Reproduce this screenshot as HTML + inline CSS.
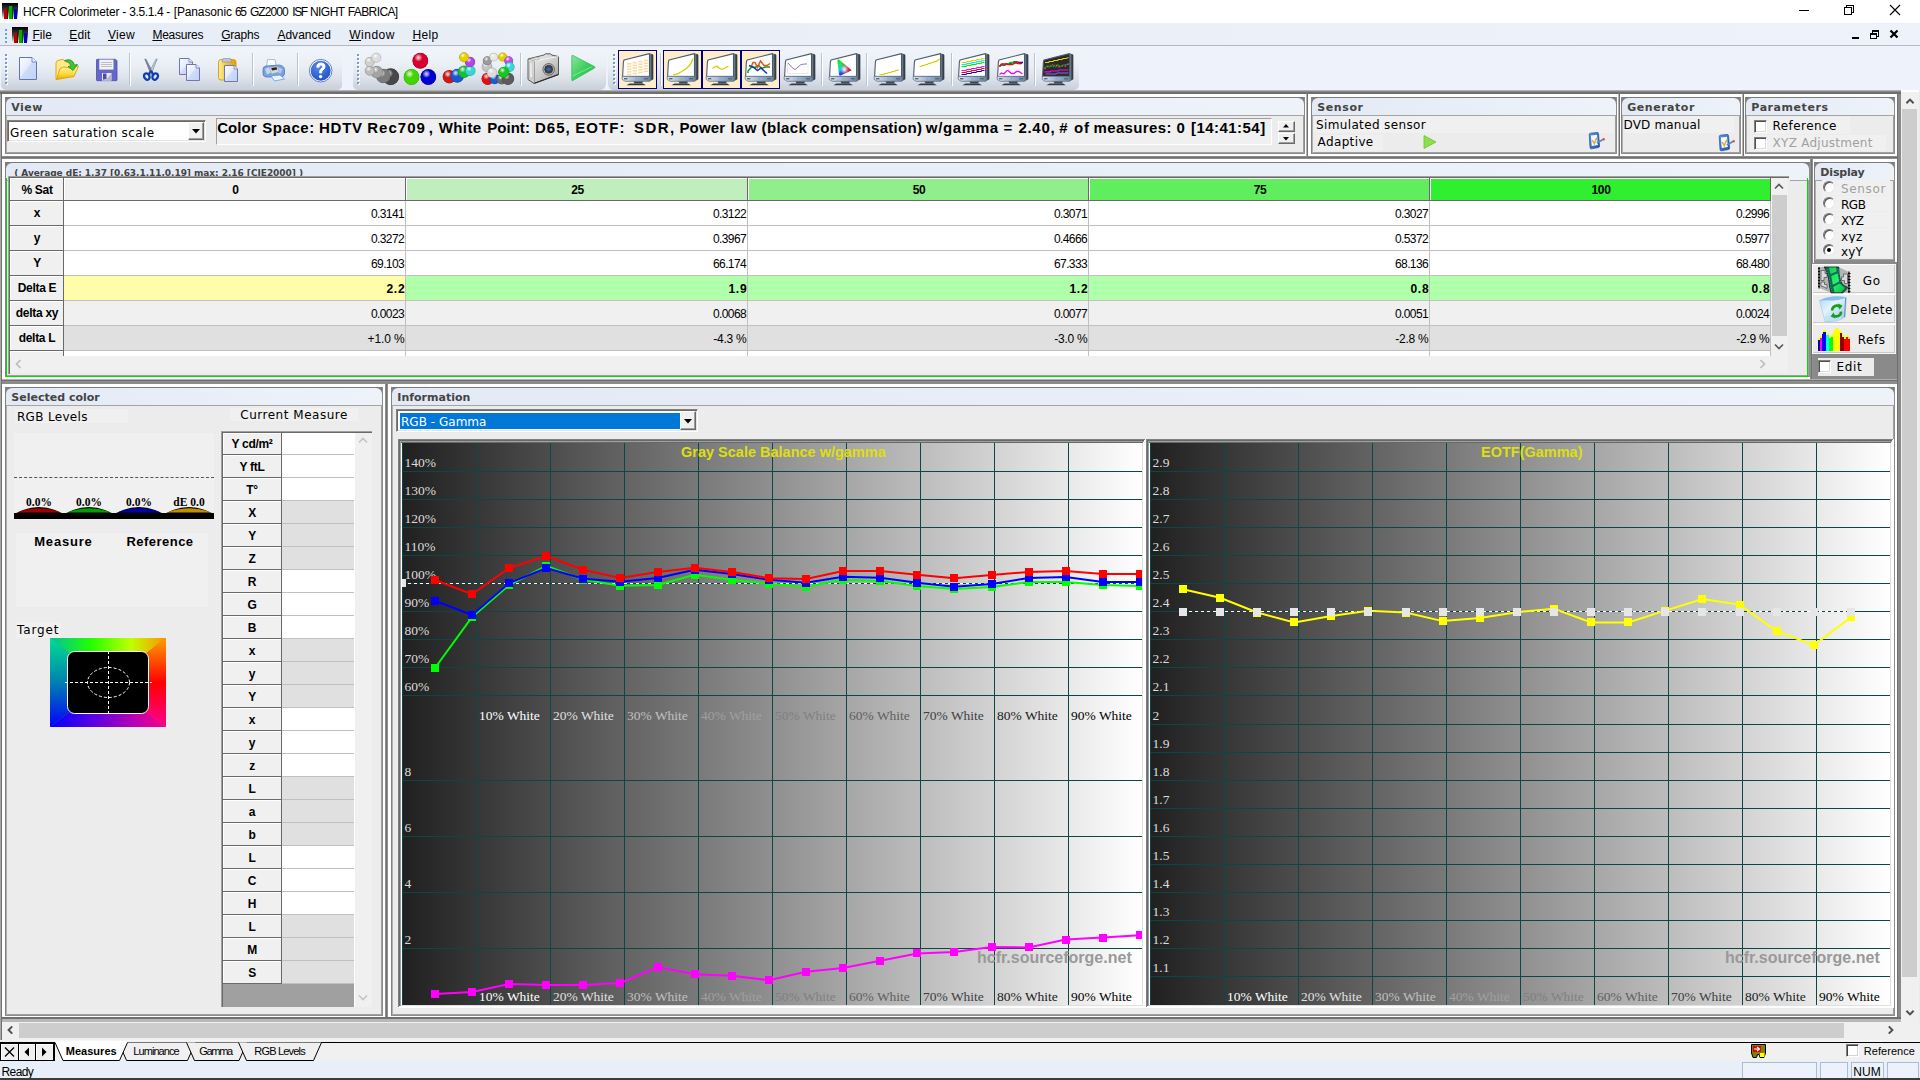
<!DOCTYPE html><html><head><meta charset="utf-8"><title>HCFR Colorimeter</title><style>
*{box-sizing:border-box;margin:0;padding:0}
html,body{width:1920px;height:1080px;overflow:hidden;background:#fff}
body{position:relative;font-family:"Liberation Sans",sans-serif;font-size:12px;color:#000}
.a{position:absolute}
.t{position:absolute;white-space:pre;line-height:1}
.seg{font-family:"Liberation Sans",sans-serif}
.ver{font-family:"DejaVu Sans","Liberation Sans",sans-serif}
.ser{font-family:"Liberation Serif",serif}
.grp{position:absolute;border:1px solid;border-color:#7c7c7c #8c8c8c #8c8c8c #828282;background:#ececec;box-shadow:inset 1px 0 0 #b0b0b0,inset -1px -1px 0 #a0a0a0}
.grp::before{content:"";position:absolute;left:0;right:0;top:0;height:6px;background:#808080}
.grp .hd{position:absolute;left:0;right:0;top:0;height:18px;background:linear-gradient(90deg,#e3eaf5,#eef3fa);border-bottom:1px solid #a4a4a4;border-radius:6px 6px 0 0}
.grp .hd span{position:absolute;left:7px;top:3px;font:bold 11px "DejaVu Sans","Liberation Sans",sans-serif;color:#444;white-space:pre;line-height:13px}
.sunk{position:absolute;border:1px solid;border-color:#808080 #fff #fff #808080;box-shadow:inset 1px 1px 0 #696969,inset -1px -1px 0 #e3e3e3;background:#fff}
.rais{position:absolute;border:1px solid;border-color:#fff #696969 #696969 #fff;box-shadow:inset -1px -1px 0 #a0a0a0;background:#f0f0f0}
.cb{position:absolute;width:13px;height:13px;background:#fff;border:1px solid;border-color:#808080 #fff #fff #808080;box-shadow:inset 1px 1px 0 #505050,inset -1px -1px 0 #dcdcdc}
.rd{position:absolute;width:12px;height:12px;border-radius:50%;background:#fff;border:1px solid;border-color:#707070 #e8e8e8 #e8e8e8 #707070;box-shadow:inset 1px 1px 0 #555}
</style></head><body>
<div class="a" style="left:0px;top:0px;width:1920px;height:23px;background:#fff;"></div>
<div class="t seg" style="left:23.03px;letter-spacing:-0.150px;top:6.00px;font-size:12px;">HCFR Colorimeter</div>
<div class="t seg" style="left:122.28px;top:6.00px;font-size:12px;">-</div>
<div class="t seg" style="left:129.28px;letter-spacing:-0.377px;top:6.00px;font-size:12px;">3.5.1.4</div>
<div class="t seg" style="left:166.28px;top:6.00px;font-size:12px;">-</div>
<div class="t seg" style="left:173.68px;letter-spacing:-0.121px;top:6.00px;font-size:12px;">[Panasonic</div>
<div class="t seg" style="left:234.88px;letter-spacing:-1.269px;top:6.00px;font-size:12px;">65</div>
<div class="t seg" style="left:249.88px;letter-spacing:-0.904px;top:6.00px;font-size:12px;">GZ2000</div>
<div class="t seg" style="left:292.28px;letter-spacing:-1.366px;top:6.00px;font-size:12px;">ISF</div>
<div class="t seg" style="left:309.88px;letter-spacing:-0.526px;top:6.00px;font-size:12px;">NIGHT</div>
<div class="t seg" style="left:347.78px;letter-spacing:-0.607px;top:6.00px;font-size:12px;">FABRICA]</div>
<div class="a" style="left:0px;top:23px;width:1920px;height:23px;background:linear-gradient(90deg,#e7edf6,#eef2fa);border-bottom:1px solid #b4b8c0"></div>
<div class="t seg" style="left:32.38px;letter-spacing:0.077px;top:29.00px;font-size:12px;text-underline-offset:1px;"><u>F</u>ile</div>
<div class="t seg" style="left:69.28px;letter-spacing:0.162px;top:29.00px;font-size:12px;text-underline-offset:1px;"><u>E</u>dit</div>
<div class="t seg" style="left:108.03px;letter-spacing:0.293px;top:29.00px;font-size:12px;text-underline-offset:1px;"><u>V</u>iew</div>
<div class="t seg" style="left:152.38px;letter-spacing:-0.230px;top:29.00px;font-size:12px;text-underline-offset:1px;"><u>M</u>easures</div>
<div class="t seg" style="left:221.18px;letter-spacing:-0.217px;top:29.00px;font-size:12px;text-underline-offset:1px;"><u>G</u>raphs</div>
<div class="t seg" style="left:277.38px;letter-spacing:0.028px;top:29.00px;font-size:12px;text-underline-offset:1px;"><u>A</u>dvanced</div>
<div class="t seg" style="left:349.28px;letter-spacing:0.500px;top:29.00px;font-size:12px;text-underline-offset:1px;"><u>W</u>indow</div>
<div class="t seg" style="left:412.38px;letter-spacing:0.384px;top:29.00px;font-size:12px;text-underline-offset:1px;"><u>H</u>elp</div>
<div class="a" style="left:0px;top:46px;width:1920px;height:44px;background:#eef2fa;"></div>
<div class="a" style="left:2px;top:48px;width:340px;height:42px;background:linear-gradient(#f0f4fb,#e8edf5 45%,#dbe1ea 70%,#c9d0da);border-radius:0 0 6px 6px"></div>
<div class="a" style="left:353px;top:48px;width:253px;height:42px;background:linear-gradient(#f0f4fb,#e8edf5 45%,#dbe1ea 70%,#c9d0da);border-radius:0 0 6px 6px"></div>
<div class="a" style="left:608px;top:48px;width:470px;height:42px;background:linear-gradient(#f0f4fb,#e8edf5 45%,#dbe1ea 70%,#c9d0da);border-radius:0 0 6px 6px"></div>
<div class="a" style="left:0px;top:90px;width:1920px;height:952px;background:#fff;"></div>
<div class="a" style="left:0px;top:90px;width:1901px;height:1px;background:#b0b0b0;"></div>
<div class="a" style="left:0px;top:91px;width:1901px;height:1px;background:#8a8a8a;"></div>
<div class="a" style="left:0px;top:92px;width:1901px;height:1px;background:#6f6f6f;"></div>
<div class="a" style="left:0px;top:93px;width:1901px;height:1px;background:#6f6f6f;"></div>
<div class="a" style="left:0px;top:94px;width:1px;height:946px;background:#a8a8a8;"></div>
<div class="a" style="left:1px;top:94px;width:1px;height:946px;background:#707070;"></div>
<div class="a" style="left:1897px;top:94px;width:1px;height:924px;background:#707070;"></div>
<div class="a" style="left:1898px;top:94px;width:3px;height:925px;background:#898989;"></div>
<div class="a" style="left:2px;top:1017px;width:1899px;height:1px;background:#707070;"></div>
<div class="a" style="left:2px;top:1018px;width:1899px;height:1px;background:#707070;"></div>
<div class="a" style="left:2px;top:1019px;width:1899px;height:1px;background:#b8b8b8;"></div>
<div class="a" style="left:2px;top:1020px;width:1899px;height:1px;background:#b8b8b8;"></div>
<div class="a" style="left:2px;top:1021px;width:1899px;height:1px;background:#b8b8b8;"></div>
<div class="a" style="left:2px;top:156px;width:1895px;height:1px;background:#8c8c8c;"></div>
<div class="a" style="left:2px;top:157px;width:1895px;height:1px;background:#6e6e6e;"></div>
<div class="a" style="left:2px;top:158px;width:1895px;height:1px;background:#8c8c8c;"></div>
<div class="a" style="left:2px;top:379px;width:1895px;height:1px;background:#b0b0b0;"></div>
<div class="a" style="left:2px;top:380px;width:1895px;height:1px;background:#707070;"></div>
<div class="a" style="left:2px;top:381px;width:1895px;height:1px;background:#8c8c8c;"></div>
<div class="a" style="left:2px;top:382px;width:1895px;height:1px;background:#8c8c8c;"></div>
<div class="a" style="left:2px;top:383px;width:1895px;height:1px;background:#8c8c8c;"></div>
<div class="a" style="left:1306px;top:94px;width:1px;height:62px;background:#b4b4b4;"></div>
<div class="a" style="left:1307px;top:94px;width:1px;height:62px;background:#707070;"></div>
<div class="a" style="left:1618px;top:94px;width:1px;height:62px;background:#b4b4b4;"></div>
<div class="a" style="left:1619px;top:94px;width:1px;height:62px;background:#707070;"></div>
<div class="a" style="left:1742px;top:94px;width:1px;height:62px;background:#b4b4b4;"></div>
<div class="a" style="left:1743px;top:94px;width:1px;height:62px;background:#707070;"></div>
<div class="a" style="left:1810px;top:159px;width:1px;height:220px;background:#909090;"></div>
<div class="a" style="left:1811px;top:159px;width:1px;height:220px;background:#707070;"></div>
<div class="a" style="left:1812px;top:159px;width:1px;height:220px;background:#909090;"></div>
<div class="a" style="left:385px;top:384px;width:1px;height:633px;background:#909090;"></div>
<div class="a" style="left:386px;top:384px;width:1px;height:633px;background:#707070;"></div>
<div class="a" style="left:387px;top:384px;width:1px;height:633px;background:#909090;"></div>
<div class="a" style="left:1901px;top:92px;width:18px;height:930px;background:#f0f0f0;"></div>
<div class="a" style="left:1902px;top:109px;width:15px;height:868px;background:#cdcdcd;"></div>
<div class="a" style="left:1919px;top:90px;width:1px;height:952px;background:#ebebeb;"></div>
<div class="a" style="left:2px;top:1022px;width:1918px;height:18px;background:#f0f0f0;"></div>
<div class="a" style="left:19px;top:1023px;width:1825px;height:15px;background:#cdcdcd;"></div>
<svg class="a" style="left:1905px;top:96px" width="10" height="10" viewBox="0 0 10 10"><path d="M1.4 7.2 L5 3.6 L8.6 7.2" fill="none" stroke="#505050" stroke-width="2"/></svg>
<svg class="a" style="left:1905px;top:1008px" width="10" height="10" viewBox="0 0 10 10"><path d="M1.4 2.8 L5 6.4 L8.6 2.8" fill="none" stroke="#505050" stroke-width="2"/></svg>
<svg class="a" style="left:5px;top:1025px" width="10" height="10" viewBox="0 0 10 10"><path d="M7.2 1.4 L3.6 5 L7.2 8.6" fill="none" stroke="#505050" stroke-width="2"/></svg>
<svg class="a" style="left:1886px;top:1025px" width="10" height="10" viewBox="0 0 10 10"><path d="M2.8 1.4 L6.4 5 L2.8 8.6" fill="none" stroke="#505050" stroke-width="2"/></svg>
<div class="a" style="left:0px;top:1040px;width:1920px;height:2px;background:#f4f4f4;"></div>
<div class="a" style="left:0px;top:1042px;width:1920px;height:1px;background:#000;"></div>
<div class="a" style="left:0px;top:1043px;width:1920px;height:18px;background:#f0f0f0;"></div>
<div class="a" style="left:0px;top:1061px;width:1920px;height:17px;background:#e9eff8;"></div>
<div class="a" style="left:0px;top:1078px;width:1920px;height:2px;background:#3a3a3a;"></div>
<div class="t seg" style="left:1.58px;letter-spacing:-0.637px;top:1066.00px;font-size:12px;">Ready</div>
<div class="grp" style="left:5px;top:97px;width:1300px;height:57px;"><div class="hd"></div></div>
<div class="t ver" style="left:11.34px;letter-spacing:0.467px;top:102.00px;font-size:11px;font-weight:bold;color:#444;">View</div>
<div class="grp" style="left:1311px;top:97px;width:306px;height:57px;"><div class="hd"></div></div>
<div class="t ver" style="left:1317.34px;letter-spacing:0.574px;top:102.00px;font-size:11px;font-weight:bold;color:#444;">Sensor</div>
<div class="grp" style="left:1621px;top:97px;width:120px;height:57px;"><div class="hd"></div></div>
<div class="t ver" style="left:1627.34px;letter-spacing:0.518px;top:102.00px;font-size:11px;font-weight:bold;color:#444;">Generator</div>
<div class="grp" style="left:1745px;top:97px;width:150px;height:57px;"><div class="hd"></div></div>
<div class="t ver" style="left:1751.34px;letter-spacing:0.552px;top:102.00px;font-size:11px;font-weight:bold;color:#444;">Parameters</div>
<div class="sunk" style="left:7px;top:120px;width:199px;height:22px"></div>
<div class="t ver" style="left:10.08px;letter-spacing:0.374px;top:127.00px;font-size:12px;">Green saturation scale</div>
<div class="rais" style="left:188px;top:122px;width:16px;height:18px"></div>
<svg class="a" style="left:192px;top:129px" width="8" height="5"><path d="M0 0H8L4 4.5Z" fill="#000"/></svg>
<div class="a" style="left:216px;top:118px;width:1056px;height:27px;border:1px solid;border-color:#a0a0a0 #fff #fff #a0a0a0;background:#f0f0f0"></div>
<div class="t seg" style="left:217.20px;letter-spacing:0.032px;top:120.00px;font-size:15px;font-weight:bold;">Color</div>
<div class="t seg" style="left:262.20px;letter-spacing:0.579px;top:120.00px;font-size:15px;font-weight:bold;">Space:</div>
<div class="t seg" style="left:319.00px;letter-spacing:0.752px;top:120.00px;font-size:15px;font-weight:bold;">HDTV</div>
<div class="t seg" style="left:367.20px;letter-spacing:1.031px;top:120.00px;font-size:15px;font-weight:bold;">Rec709</div>
<div class="t seg" style="left:428.70px;top:120.00px;font-size:15px;font-weight:bold;">,</div>
<div class="t seg" style="left:438.70px;letter-spacing:0.418px;top:120.00px;font-size:15px;font-weight:bold;">White</div>
<div class="t seg" style="left:487.20px;letter-spacing:0.040px;top:120.00px;font-size:15px;font-weight:bold;">Point:</div>
<div class="t seg" style="left:534.90px;letter-spacing:1.071px;top:120.00px;font-size:15px;font-weight:bold;">D65,</div>
<div class="t seg" style="left:575.30px;letter-spacing:1.050px;top:120.00px;font-size:15px;font-weight:bold;">EOTF:</div>
<div class="t seg" style="left:634.00px;letter-spacing:1.452px;top:120.00px;font-size:15px;font-weight:bold;">SDR,</div>
<div class="t seg" style="left:679.40px;letter-spacing:0.196px;top:120.00px;font-size:15px;font-weight:bold;">Power</div>
<div class="t seg" style="left:730.50px;letter-spacing:0.906px;top:120.00px;font-size:15px;font-weight:bold;">law</div>
<div class="t seg" style="left:761.50px;letter-spacing:0.388px;top:120.00px;font-size:15px;font-weight:bold;">(black</div>
<div class="t seg" style="left:811.50px;letter-spacing:0.326px;top:120.00px;font-size:15px;font-weight:bold;">compensation)</div>
<div class="t seg" style="left:925.85px;letter-spacing:0.632px;top:120.00px;font-size:15px;font-weight:bold;">w/gamma</div>
<div class="t seg" style="left:1003.50px;top:120.00px;font-size:15px;font-weight:bold;">=</div>
<div class="t seg" style="left:1018.50px;letter-spacing:0.681px;top:120.00px;font-size:15px;font-weight:bold;">2.40,</div>
<div class="t seg" style="left:1059.35px;top:120.00px;font-size:15px;font-weight:bold;">#</div>
<div class="t seg" style="left:1074.00px;letter-spacing:0.728px;top:120.00px;font-size:15px;font-weight:bold;">of</div>
<div class="t seg" style="left:1093.50px;letter-spacing:0.357px;top:120.00px;font-size:15px;font-weight:bold;">measures:</div>
<div class="t seg" style="left:1176.50px;top:120.00px;font-size:15px;font-weight:bold;">0</div>
<div class="t seg" style="left:1191.00px;letter-spacing:0.456px;top:120.00px;font-size:15px;font-weight:bold;">[14:41:54]</div>
<div class="rais" style="left:1278px;top:121px;width:17px;height:11px"></div>
<div class="rais" style="left:1278px;top:133px;width:17px;height:11px"></div>
<svg class="a" style="left:1283px;top:124px" width="6" height="4"><path d="M0 3.5H6L3 0Z" fill="#000"/></svg>
<svg class="a" style="left:1283px;top:137px" width="6" height="4"><path d="M0 0H6L3 3.5Z" fill="#000"/></svg>
<div class="a" style="left:1314px;top:116px;width:300px;height:17px;background:#f0f0f0;"></div>
<div class="t ver" style="left:1315.98px;letter-spacing:0.367px;top:119.00px;font-size:12px;">Simulated sensor</div>
<div class="a" style="left:1317px;top:135px;width:66px;height:16px;background:#f0f0f0;"></div>
<div class="t ver" style="left:1317.58px;letter-spacing:0.362px;top:136.00px;font-size:12px;">Adaptive</div>
<svg class="a" style="left:1423px;top:135px" width="14" height="14"><path d="M1 0.5L13 7L1 13.5Z" fill="#8be04a" stroke="#6cc235" stroke-width="0.8"/></svg>
<div class="a" style="left:1624px;top:116px;width:110px;height:17px;background:#f0f0f0;"></div>
<div class="t ver" style="left:1623.48px;letter-spacing:0.178px;top:119.00px;font-size:12px;">DVD manual</div>
<div class="a" style="left:1750px;top:117px;width:100px;height:17px;background:#f0f0f0;"></div>
<div class="a" style="left:1750px;top:135px;width:136px;height:16px;background:#f0f0f0;"></div>
<div class="cb" style="left:1754px;top:120px"></div>
<div class="t ver" style="left:1772.58px;letter-spacing:0.425px;top:120.00px;font-size:12px;">Reference</div>
<div class="cb" style="left:1754px;top:137px"></div>
<div class="t ver" style="left:1772.58px;letter-spacing:0.258px;top:137.00px;font-size:12px;color:#a0a0a0;">XYZ Adjustment</div>
<div class="grp" style="left:5px;top:162px;width:1805px;height:215px;"><div class="hd"></div></div>
<div class="t ver" style="left:14.16px;letter-spacing:-0.047px;top:169.00px;font-size:9px;font-weight:bold;color:#444;">( Average dE: 1.37 [0.63,1.11,0.19] max: 2.16 [CIE2000] )</div>
<div class="a" style="left:6px;top:163px;width:1802px;height:214px;border:1px solid #0d0;border-top:none;clip-path:inset(15px 0 0 0)"></div>
<div class="a" style="left:8px;top:176px;width:1782px;height:198px;background:#ececec;"></div>
<div class="a" style="left:8px;top:176px;width:1781px;height:1px;background:#a0a0a0;"></div>
<div class="a" style="left:8px;top:177px;width:1781px;height:1px;background:#696969;"></div>
<div class="a" style="left:8px;top:176px;width:1px;height:198px;background:#a0a0a0;"></div>
<div class="a" style="left:9px;top:177px;width:1px;height:197px;background:#696969;"></div>
<div class="a" style="left:10px;top:178px;width:1761px;height:178px;background:#fff;"></div>
<div class="a" style="left:10px;top:178px;width:53px;height:22px;background:#f0f0f0;border-top:1px solid #fff;border-left:1px solid #fff"></div>
<div class="a" style="left:10px;top:200px;width:53px;height:1px;background:#696969;"></div>
<div class="t seg" style="left:10px;top:183.64px;width:54px;text-align:center;font-size:12px;font-weight:bold;letter-spacing:-0.3px">% Sat</div>
<div class="a" style="left:10px;top:201px;width:53px;height:24px;background:#f0f0f0;border-top:1px solid #fff;border-left:1px solid #fff"></div>
<div class="a" style="left:10px;top:225px;width:53px;height:1px;background:#696969;"></div>
<div class="t seg" style="left:10px;top:207.14px;width:54px;text-align:center;font-size:12px;font-weight:bold;letter-spacing:-0.3px">x</div>
<div class="a" style="left:10px;top:226px;width:53px;height:24px;background:#f0f0f0;border-top:1px solid #fff;border-left:1px solid #fff"></div>
<div class="a" style="left:10px;top:250px;width:53px;height:1px;background:#696969;"></div>
<div class="t seg" style="left:10px;top:232.14px;width:54px;text-align:center;font-size:12px;font-weight:bold;letter-spacing:-0.3px">y</div>
<div class="a" style="left:10px;top:251px;width:53px;height:24px;background:#f0f0f0;border-top:1px solid #fff;border-left:1px solid #fff"></div>
<div class="a" style="left:10px;top:275px;width:53px;height:1px;background:#696969;"></div>
<div class="t seg" style="left:10px;top:257.14px;width:54px;text-align:center;font-size:12px;font-weight:bold;letter-spacing:-0.3px">Y</div>
<div class="a" style="left:10px;top:276px;width:53px;height:24px;background:#f0f0f0;border-top:1px solid #fff;border-left:1px solid #fff"></div>
<div class="a" style="left:10px;top:300px;width:53px;height:1px;background:#696969;"></div>
<div class="t seg" style="left:10px;top:282.14px;width:54px;text-align:center;font-size:12px;font-weight:bold;letter-spacing:-0.3px">Delta E</div>
<div class="a" style="left:10px;top:301px;width:53px;height:24px;background:#f0f0f0;border-top:1px solid #fff;border-left:1px solid #fff"></div>
<div class="a" style="left:10px;top:325px;width:53px;height:1px;background:#696969;"></div>
<div class="t seg" style="left:10px;top:307.14px;width:54px;text-align:center;font-size:12px;font-weight:bold;letter-spacing:-0.3px">delta xy</div>
<div class="a" style="left:10px;top:326px;width:53px;height:24px;background:#f0f0f0;border-top:1px solid #fff;border-left:1px solid #fff"></div>
<div class="a" style="left:10px;top:350px;width:53px;height:1px;background:#696969;"></div>
<div class="t seg" style="left:10px;top:332.14px;width:54px;text-align:center;font-size:12px;font-weight:bold;letter-spacing:-0.3px">delta L</div>
<div class="a" style="left:10px;top:351px;width:53px;height:5px;background:#f0f0f0;border-top:1px solid #fff;border-left:1px solid #fff"></div>
<div class="a" style="left:63px;top:178px;width:1px;height:178px;background:#696969;"></div>
<div class="a" style="left:64px;top:178px;width:341px;height:22px;background:#f0f0f0;border-top:1px solid #fff;border-left:1px solid #fff"></div>
<div class="a" style="left:64px;top:200px;width:342px;height:1px;background:#696969;"></div>
<div class="a" style="left:405px;top:178px;width:1px;height:22px;background:#696969;"></div>
<div class="t seg" style="left:64px;top:183.64px;width:343px;text-align:center;font-size:12px;font-weight:bold;letter-spacing:-0.3px">0</div>
<div class="a" style="left:406px;top:178px;width:341px;height:22px;background:#c0eebc;border-top:1px solid #fff;border-left:1px solid #fff"></div>
<div class="a" style="left:406px;top:200px;width:342px;height:1px;background:#696969;"></div>
<div class="a" style="left:747px;top:178px;width:1px;height:22px;background:#696969;"></div>
<div class="t seg" style="left:406px;top:183.64px;width:343px;text-align:center;font-size:12px;font-weight:bold;letter-spacing:-0.3px">25</div>
<div class="a" style="left:748px;top:178px;width:340px;height:22px;background:#90ee8c;border-top:1px solid #fff;border-left:1px solid #fff"></div>
<div class="a" style="left:748px;top:200px;width:341px;height:1px;background:#696969;"></div>
<div class="a" style="left:1088px;top:178px;width:1px;height:22px;background:#696969;"></div>
<div class="t seg" style="left:748px;top:183.64px;width:342px;text-align:center;font-size:12px;font-weight:bold;letter-spacing:-0.3px">50</div>
<div class="a" style="left:1089px;top:178px;width:340px;height:22px;background:#60ee5e;border-top:1px solid #fff;border-left:1px solid #fff"></div>
<div class="a" style="left:1089px;top:200px;width:341px;height:1px;background:#696969;"></div>
<div class="a" style="left:1429px;top:178px;width:1px;height:22px;background:#696969;"></div>
<div class="t seg" style="left:1089px;top:183.64px;width:342px;text-align:center;font-size:12px;font-weight:bold;letter-spacing:-0.3px">75</div>
<div class="a" style="left:1430px;top:178px;width:340px;height:22px;background:#30ee30;border-top:1px solid #fff;border-left:1px solid #fff"></div>
<div class="a" style="left:1430px;top:200px;width:341px;height:1px;background:#696969;"></div>
<div class="a" style="left:1770px;top:178px;width:1px;height:22px;background:#696969;"></div>
<div class="t seg" style="left:1430px;top:183.64px;width:342px;text-align:center;font-size:12px;font-weight:bold;letter-spacing:-0.3px">100</div>
<div class="a" style="left:64px;top:201px;width:341px;height:24px;background:#fff;"></div>
<div class="a" style="left:64px;top:225px;width:342px;height:1px;background:#c0c0c0;"></div>
<div class="a" style="left:405px;top:201px;width:1px;height:25px;background:#c0c0c0;"></div>
<div class="t seg" style="left:370.98px;letter-spacing:-0.593px;top:208.00px;font-size:12px;">0.3141</div>
<div class="a" style="left:406px;top:201px;width:341px;height:24px;background:#fff;"></div>
<div class="a" style="left:406px;top:225px;width:342px;height:1px;background:#c0c0c0;"></div>
<div class="a" style="left:747px;top:201px;width:1px;height:25px;background:#c0c0c0;"></div>
<div class="t seg" style="left:712.98px;letter-spacing:-0.593px;top:208.00px;font-size:12px;">0.3122</div>
<div class="a" style="left:748px;top:201px;width:340px;height:24px;background:#fff;"></div>
<div class="a" style="left:748px;top:225px;width:341px;height:1px;background:#c0c0c0;"></div>
<div class="a" style="left:1088px;top:201px;width:1px;height:25px;background:#c0c0c0;"></div>
<div class="t seg" style="left:1053.98px;letter-spacing:-0.593px;top:208.00px;font-size:12px;">0.3071</div>
<div class="a" style="left:1089px;top:201px;width:340px;height:24px;background:#fff;"></div>
<div class="a" style="left:1089px;top:225px;width:341px;height:1px;background:#c0c0c0;"></div>
<div class="a" style="left:1429px;top:201px;width:1px;height:25px;background:#c0c0c0;"></div>
<div class="t seg" style="left:1394.98px;letter-spacing:-0.593px;top:208.00px;font-size:12px;">0.3027</div>
<div class="a" style="left:1430px;top:201px;width:340px;height:24px;background:#fff;"></div>
<div class="a" style="left:1430px;top:225px;width:341px;height:1px;background:#c0c0c0;"></div>
<div class="a" style="left:1770px;top:201px;width:1px;height:25px;background:#c0c0c0;"></div>
<div class="t seg" style="left:1735.98px;letter-spacing:-0.593px;top:208.00px;font-size:12px;">0.2996</div>
<div class="a" style="left:64px;top:226px;width:341px;height:24px;background:#fff;"></div>
<div class="a" style="left:64px;top:250px;width:342px;height:1px;background:#c0c0c0;"></div>
<div class="a" style="left:405px;top:226px;width:1px;height:25px;background:#c0c0c0;"></div>
<div class="t seg" style="left:370.98px;letter-spacing:-0.593px;top:233.00px;font-size:12px;">0.3272</div>
<div class="a" style="left:406px;top:226px;width:341px;height:24px;background:#fff;"></div>
<div class="a" style="left:406px;top:250px;width:342px;height:1px;background:#c0c0c0;"></div>
<div class="a" style="left:747px;top:226px;width:1px;height:25px;background:#c0c0c0;"></div>
<div class="t seg" style="left:712.98px;letter-spacing:-0.593px;top:233.00px;font-size:12px;">0.3967</div>
<div class="a" style="left:748px;top:226px;width:340px;height:24px;background:#fff;"></div>
<div class="a" style="left:748px;top:250px;width:341px;height:1px;background:#c0c0c0;"></div>
<div class="a" style="left:1088px;top:226px;width:1px;height:25px;background:#c0c0c0;"></div>
<div class="t seg" style="left:1053.98px;letter-spacing:-0.593px;top:233.00px;font-size:12px;">0.4666</div>
<div class="a" style="left:1089px;top:226px;width:340px;height:24px;background:#fff;"></div>
<div class="a" style="left:1089px;top:250px;width:341px;height:1px;background:#c0c0c0;"></div>
<div class="a" style="left:1429px;top:226px;width:1px;height:25px;background:#c0c0c0;"></div>
<div class="t seg" style="left:1394.98px;letter-spacing:-0.593px;top:233.00px;font-size:12px;">0.5372</div>
<div class="a" style="left:1430px;top:226px;width:340px;height:24px;background:#fff;"></div>
<div class="a" style="left:1430px;top:250px;width:341px;height:1px;background:#c0c0c0;"></div>
<div class="a" style="left:1770px;top:226px;width:1px;height:25px;background:#c0c0c0;"></div>
<div class="t seg" style="left:1735.98px;letter-spacing:-0.593px;top:233.00px;font-size:12px;">0.5977</div>
<div class="a" style="left:64px;top:251px;width:341px;height:24px;background:#fff;"></div>
<div class="a" style="left:64px;top:275px;width:342px;height:1px;background:#c0c0c0;"></div>
<div class="a" style="left:405px;top:251px;width:1px;height:25px;background:#c0c0c0;"></div>
<div class="t seg" style="left:370.98px;letter-spacing:-0.593px;top:258.00px;font-size:12px;">69.103</div>
<div class="a" style="left:406px;top:251px;width:341px;height:24px;background:#fff;"></div>
<div class="a" style="left:406px;top:275px;width:342px;height:1px;background:#c0c0c0;"></div>
<div class="a" style="left:747px;top:251px;width:1px;height:25px;background:#c0c0c0;"></div>
<div class="t seg" style="left:712.98px;letter-spacing:-0.593px;top:258.00px;font-size:12px;">66.174</div>
<div class="a" style="left:748px;top:251px;width:340px;height:24px;background:#fff;"></div>
<div class="a" style="left:748px;top:275px;width:341px;height:1px;background:#c0c0c0;"></div>
<div class="a" style="left:1088px;top:251px;width:1px;height:25px;background:#c0c0c0;"></div>
<div class="t seg" style="left:1053.98px;letter-spacing:-0.593px;top:258.00px;font-size:12px;">67.333</div>
<div class="a" style="left:1089px;top:251px;width:340px;height:24px;background:#fff;"></div>
<div class="a" style="left:1089px;top:275px;width:341px;height:1px;background:#c0c0c0;"></div>
<div class="a" style="left:1429px;top:251px;width:1px;height:25px;background:#c0c0c0;"></div>
<div class="t seg" style="left:1394.98px;letter-spacing:-0.593px;top:258.00px;font-size:12px;">68.136</div>
<div class="a" style="left:1430px;top:251px;width:340px;height:24px;background:#fff;"></div>
<div class="a" style="left:1430px;top:275px;width:341px;height:1px;background:#c0c0c0;"></div>
<div class="a" style="left:1770px;top:251px;width:1px;height:25px;background:#c0c0c0;"></div>
<div class="t seg" style="left:1735.98px;letter-spacing:-0.593px;top:258.00px;font-size:12px;">68.480</div>
<div class="a" style="left:64px;top:276px;width:341px;height:24px;background:#fffcaa;"></div>
<div class="a" style="left:64px;top:300px;width:342px;height:1px;background:#c0c0c0;"></div>
<div class="a" style="left:405px;top:276px;width:1px;height:25px;background:#c0c0c0;"></div>
<div class="t seg" style="left:386.38px;letter-spacing:0.826px;top:283.00px;font-size:12px;font-weight:bold;">2.2</div>
<div class="a" style="left:406px;top:276px;width:341px;height:24px;background:#b0ffaa;"></div>
<div class="a" style="left:406px;top:300px;width:342px;height:1px;background:#c0c0c0;"></div>
<div class="a" style="left:747px;top:276px;width:1px;height:25px;background:#c0c0c0;"></div>
<div class="t seg" style="left:728.38px;letter-spacing:0.826px;top:283.00px;font-size:12px;font-weight:bold;">1.9</div>
<div class="a" style="left:748px;top:276px;width:340px;height:24px;background:#b0ffaa;"></div>
<div class="a" style="left:748px;top:300px;width:341px;height:1px;background:#c0c0c0;"></div>
<div class="a" style="left:1088px;top:276px;width:1px;height:25px;background:#c0c0c0;"></div>
<div class="t seg" style="left:1069.38px;letter-spacing:0.826px;top:283.00px;font-size:12px;font-weight:bold;">1.2</div>
<div class="a" style="left:1089px;top:276px;width:340px;height:24px;background:#b0ffaa;"></div>
<div class="a" style="left:1089px;top:300px;width:341px;height:1px;background:#c0c0c0;"></div>
<div class="a" style="left:1429px;top:276px;width:1px;height:25px;background:#c0c0c0;"></div>
<div class="t seg" style="left:1410.38px;letter-spacing:0.826px;top:283.00px;font-size:12px;font-weight:bold;">0.8</div>
<div class="a" style="left:1430px;top:276px;width:340px;height:24px;background:#b0ffaa;"></div>
<div class="a" style="left:1430px;top:300px;width:341px;height:1px;background:#c0c0c0;"></div>
<div class="a" style="left:1770px;top:276px;width:1px;height:25px;background:#c0c0c0;"></div>
<div class="t seg" style="left:1751.38px;letter-spacing:0.826px;top:283.00px;font-size:12px;font-weight:bold;">0.8</div>
<div class="a" style="left:64px;top:301px;width:341px;height:24px;background:#f0f0f0;"></div>
<div class="a" style="left:64px;top:325px;width:342px;height:1px;background:#c0c0c0;"></div>
<div class="a" style="left:405px;top:301px;width:1px;height:25px;background:#c0c0c0;"></div>
<div class="t seg" style="left:370.98px;letter-spacing:-0.593px;top:308.00px;font-size:12px;">0.0023</div>
<div class="a" style="left:406px;top:301px;width:341px;height:24px;background:#f0f0f0;"></div>
<div class="a" style="left:406px;top:325px;width:342px;height:1px;background:#c0c0c0;"></div>
<div class="a" style="left:747px;top:301px;width:1px;height:25px;background:#c0c0c0;"></div>
<div class="t seg" style="left:712.98px;letter-spacing:-0.593px;top:308.00px;font-size:12px;">0.0068</div>
<div class="a" style="left:748px;top:301px;width:340px;height:24px;background:#f0f0f0;"></div>
<div class="a" style="left:748px;top:325px;width:341px;height:1px;background:#c0c0c0;"></div>
<div class="a" style="left:1088px;top:301px;width:1px;height:25px;background:#c0c0c0;"></div>
<div class="t seg" style="left:1053.98px;letter-spacing:-0.593px;top:308.00px;font-size:12px;">0.0077</div>
<div class="a" style="left:1089px;top:301px;width:340px;height:24px;background:#f0f0f0;"></div>
<div class="a" style="left:1089px;top:325px;width:341px;height:1px;background:#c0c0c0;"></div>
<div class="a" style="left:1429px;top:301px;width:1px;height:25px;background:#c0c0c0;"></div>
<div class="t seg" style="left:1394.98px;letter-spacing:-0.593px;top:308.00px;font-size:12px;">0.0051</div>
<div class="a" style="left:1430px;top:301px;width:340px;height:24px;background:#f0f0f0;"></div>
<div class="a" style="left:1430px;top:325px;width:341px;height:1px;background:#c0c0c0;"></div>
<div class="a" style="left:1770px;top:301px;width:1px;height:25px;background:#c0c0c0;"></div>
<div class="t seg" style="left:1735.98px;letter-spacing:-0.593px;top:308.00px;font-size:12px;">0.0024</div>
<div class="a" style="left:64px;top:326px;width:341px;height:24px;background:#e0e0e0;"></div>
<div class="a" style="left:64px;top:350px;width:342px;height:1px;background:#c0c0c0;"></div>
<div class="a" style="left:405px;top:326px;width:1px;height:25px;background:#c0c0c0;"></div>
<div class="t seg" style="left:367.58px;letter-spacing:-0.113px;top:333.00px;font-size:12px;">+1.0 %</div>
<div class="a" style="left:406px;top:326px;width:341px;height:24px;background:#e0e0e0;"></div>
<div class="a" style="left:406px;top:350px;width:342px;height:1px;background:#c0c0c0;"></div>
<div class="a" style="left:747px;top:326px;width:1px;height:25px;background:#c0c0c0;"></div>
<div class="t seg" style="left:713.28px;letter-spacing:-0.250px;top:333.00px;font-size:12px;">-4.3 %</div>
<div class="a" style="left:748px;top:326px;width:340px;height:24px;background:#e0e0e0;"></div>
<div class="a" style="left:748px;top:350px;width:341px;height:1px;background:#c0c0c0;"></div>
<div class="a" style="left:1088px;top:326px;width:1px;height:25px;background:#c0c0c0;"></div>
<div class="t seg" style="left:1054.28px;letter-spacing:-0.250px;top:333.00px;font-size:12px;">-3.0 %</div>
<div class="a" style="left:1089px;top:326px;width:340px;height:24px;background:#e0e0e0;"></div>
<div class="a" style="left:1089px;top:350px;width:341px;height:1px;background:#c0c0c0;"></div>
<div class="a" style="left:1429px;top:326px;width:1px;height:25px;background:#c0c0c0;"></div>
<div class="t seg" style="left:1395.28px;letter-spacing:-0.250px;top:333.00px;font-size:12px;">-2.8 %</div>
<div class="a" style="left:1430px;top:326px;width:340px;height:24px;background:#e0e0e0;"></div>
<div class="a" style="left:1430px;top:350px;width:341px;height:1px;background:#c0c0c0;"></div>
<div class="a" style="left:1770px;top:326px;width:1px;height:25px;background:#c0c0c0;"></div>
<div class="t seg" style="left:1736.28px;letter-spacing:-0.250px;top:333.00px;font-size:12px;">-2.9 %</div>
<div class="a" style="left:405px;top:351px;width:1px;height:5px;background:#c0c0c0;"></div>
<div class="a" style="left:747px;top:351px;width:1px;height:5px;background:#c0c0c0;"></div>
<div class="a" style="left:1088px;top:351px;width:1px;height:5px;background:#c0c0c0;"></div>
<div class="a" style="left:1429px;top:351px;width:1px;height:5px;background:#c0c0c0;"></div>
<div class="a" style="left:1770px;top:351px;width:1px;height:5px;background:#c0c0c0;"></div>
<div class="a" style="left:10px;top:356px;width:1761px;height:17px;background:#f0f0f0;"></div>
<div class="a" style="left:1771px;top:178px;width:17px;height:195px;background:#f0f0f0;"></div>
<div class="a" style="left:1772px;top:195px;width:15px;height:141px;background:#cdcdcd;"></div>
<svg class="a" style="left:1774px;top:181px" width="10" height="10" viewBox="0 0 10 10"><path d="M1 7.5 L5 3.5 L9 7.5" fill="none" stroke="#555" stroke-width="1.6"/></svg>
<svg class="a" style="left:1774px;top:342px" width="10" height="10" viewBox="0 0 10 10"><path d="M1 2.5 L5 6.5 L9 2.5" fill="none" stroke="#555" stroke-width="1.6"/></svg>
<svg class="a" style="left:13px;top:359px" width="10" height="10" viewBox="0 0 10 10"><path d="M7.5 1 L3.5 5 L7.5 9" fill="none" stroke="#bbb" stroke-width="1.6"/></svg>
<svg class="a" style="left:1758px;top:359px" width="10" height="10" viewBox="0 0 10 10"><path d="M2.5 1 L6.5 5 L2.5 9" fill="none" stroke="#bbb" stroke-width="1.6"/></svg>
<div class="a" style="left:1813px;top:159px;width:84px;height:220px;background:#8a8a8a;"></div>
<div class="a" style="left:1813px;top:159px;width:84px;height:3px;background:#fff;"></div>
<div class="a" style="left:1813px;top:159px;width:1px;height:104px;background:#fff;"></div>
<div class="a" style="left:1895px;top:159px;width:2px;height:103px;background:#fff;"></div>
<div class="grp" style="left:1814px;top:162px;width:81px;height:99px;"><div class="hd"></div></div>
<div class="t ver" style="left:1820.34px;letter-spacing:-0.173px;top:167.00px;font-size:11px;font-weight:bold;color:#444;">Display</div>
<div class="a" style="left:1822px;top:179.6px;width:68px;height:15px;background:#f0f0f0;"></div>
<div class="rd" style="left:1823px;top:181.1px"></div>
<div class="t ver" style="left:1840.98px;letter-spacing:0.660px;top:183.00px;font-size:12px;color:#a0a0a0;">Sensor</div>
<div class="a" style="left:1822px;top:195.6px;width:68px;height:15px;background:#f0f0f0;"></div>
<div class="rd" style="left:1823px;top:197.1px"></div>
<div class="t ver" style="left:1840.98px;letter-spacing:-0.467px;top:199.00px;font-size:12px;color:#000;">RGB</div>
<div class="a" style="left:1822px;top:211.5px;width:68px;height:15px;background:#f0f0f0;"></div>
<div class="rd" style="left:1823px;top:213.0px"></div>
<div class="t ver" style="left:1840.98px;letter-spacing:-0.421px;top:215.00px;font-size:12px;color:#000;">XYZ</div>
<div class="a" style="left:1822px;top:227.5px;width:68px;height:15px;background:#f0f0f0;"></div>
<div class="rd" style="left:1823px;top:229.0px"></div>
<div class="t ver" style="left:1840.98px;letter-spacing:0.462px;top:231.00px;font-size:12px;color:#000;">xyz</div>
<div class="a" style="left:1822px;top:242.5px;width:68px;height:15px;background:#f0f0f0;"></div>
<div class="rd" style="left:1823px;top:244.0px"></div>
<div class="t ver" style="left:1840.98px;letter-spacing:0.147px;top:246.00px;font-size:12px;color:#000;">xyY</div>
<div class="a" style="left:1827px;top:248px;width:4px;height:4px;border-radius:50%;background:#000"></div>
<div class="a" style="left:1812px;top:264px;width:84px;height:30px;background:#ececec;border:1px solid;border-color:#fff #f8f8f8 #f8f8f8 #fff;box-shadow:inset -1px -1px 0 #c8c8c8"></div>
<div class="a" style="left:1812px;top:294px;width:84px;height:30px;background:#ececec;border:1px solid;border-color:#fff #f8f8f8 #f8f8f8 #fff;box-shadow:inset -1px -1px 0 #c8c8c8"></div>
<div class="a" style="left:1812px;top:324px;width:84px;height:30px;background:#ececec;border:1px solid;border-color:#fff #f8f8f8 #f8f8f8 #fff;box-shadow:inset -1px -1px 0 #c8c8c8"></div>
<div class="t ver" style="left:1862.68px;letter-spacing:0.699px;top:275.00px;font-size:12px;">Go</div>
<div class="t ver" style="left:1850.28px;letter-spacing:0.560px;top:304.00px;font-size:12px;">Delete</div>
<div class="t ver" style="left:1857.78px;letter-spacing:0.556px;top:334.00px;font-size:12px;">Refs</div>
<div class="a" style="left:1818px;top:358px;width:56px;height:18px;background:#ececec;"></div>
<div class="cb" style="left:1818px;top:360px"></div>
<div class="t ver" style="left:1836.48px;letter-spacing:0.663px;top:361.00px;font-size:12px;">Edit</div>
<div class="grp" style="left:5px;top:387px;width:378px;height:629px;"><div class="hd"></div></div>
<div class="t ver" style="left:11.34px;top:392.00px;font-size:11px;font-weight:bold;color:#444;">Selected color</div>
<div class="a" style="left:15px;top:409px;width:113px;height:14px;background:#f0f0f0;"></div>
<div class="t ver" style="left:16.98px;letter-spacing:0.313px;top:411.00px;font-size:12px;">RGB Levels</div>
<div class="a" style="left:230px;top:408px;width:128px;height:13px;background:#f0f0f0;"></div>
<div class="t ver" style="left:240.28px;letter-spacing:0.518px;top:409.00px;font-size:12px;">Current Measure</div>
<div class="a" style="left:14px;top:433px;width:200px;height:86px;background:#f0f0f0;"></div>
<div class="a" style="left:14px;top:477px;width:200px;height:0;border-top:1px dashed #555"></div>
<svg class="a" style="left:14px;top:490px" width="200" height="29" viewBox="0 0 200 29"><rect x="0" y="23" width="200" height="6" fill="#000"/><path d="M0 24 Q13 17 25 17 Q37 17 50 24 Z" fill="#000"/><path d="M3 22.5 Q15 18.3 25 18.3 Q35 18.3 47 22.5 Z" fill="#a00000"/><path d="M50 24 Q63 17 75 17 Q87 17 100 24 Z" fill="#000"/><path d="M53 22.5 Q65 18.3 75 18.3 Q85 18.3 97 22.5 Z" fill="#00a000"/><path d="M100 24 Q113 17 125 17 Q137 17 150 24 Z" fill="#000"/><path d="M103 22.5 Q115 18.3 125 18.3 Q135 18.3 147 22.5 Z" fill="#0000a8"/><path d="M150 24 Q163 17 175 17 Q187 17 200 24 Z" fill="#000"/><path d="M153 22.5 Q165 18.3 175 18.3 Q185 18.3 197 22.5 Z" fill="#c09000"/><text x="25" y="16" text-anchor="middle" font-family="Liberation Serif,serif" font-weight="bold" font-size="11.5">0.0%</text><text x="75" y="16" text-anchor="middle" font-family="Liberation Serif,serif" font-weight="bold" font-size="11.5">0.0%</text><text x="125" y="16" text-anchor="middle" font-family="Liberation Serif,serif" font-weight="bold" font-size="11.5">0.0%</text><text x="175" y="16" text-anchor="middle" font-family="Liberation Serif,serif" font-weight="bold" font-size="11.5">dE 0.0</text></svg>
<div class="a" style="left:16px;top:533px;width:192px;height:74px;background:#f0f0f0;"></div>
<div class="t seg" style="left:34.22px;letter-spacing:0.802px;top:535.00px;font-size:13px;font-weight:bold;">Measure</div>
<div class="t seg" style="left:126.52px;letter-spacing:0.461px;top:535.00px;font-size:13px;font-weight:bold;">Reference</div>
<div class="a" style="left:16px;top:622px;width:45px;height:16px;background:#f0f0f0;"></div>
<div class="t ver" style="left:16.98px;letter-spacing:0.863px;top:624.00px;font-size:12px;">Target</div>
<svg class="a" style="left:50px;top:638px" width="116" height="89" viewBox="0 0 116 89"><defs><linearGradient id="tgx" x1="0" x2="1" y1="0" y2="0"><stop offset="0" stop-color="#00c0a0"/><stop offset="0.35" stop-color="#20ff00"/><stop offset="0.7" stop-color="#c0ff00"/><stop offset="1" stop-color="#ff9000"/></linearGradient><linearGradient id="tgb" x1="0" x2="1" y1="0" y2="0"><stop offset="0" stop-color="#0000ff"/><stop offset="0.4" stop-color="#6000e0"/><stop offset="0.75" stop-color="#c000b0"/><stop offset="1" stop-color="#ff0080"/></linearGradient><linearGradient id="tgl" x1="0" x2="0" y1="0" y2="1"><stop offset="0" stop-color="#00e090"/><stop offset="0.5" stop-color="#0080b0"/><stop offset="1" stop-color="#0000ff"/></linearGradient><linearGradient id="tgr" x1="0" x2="0" y1="0" y2="1"><stop offset="0" stop-color="#ffa000"/><stop offset="0.5" stop-color="#ff0000"/><stop offset="1" stop-color="#ff0090"/></linearGradient></defs><rect width="116" height="89" fill="#808080"/><polygon points="0,0 116,0 58,44.5" fill="url(#tgx)"/><polygon points="0,89 116,89 58,44.5" fill="url(#tgb)"/><polygon points="0,0 0,89 58,44.5" fill="url(#tgl)"/><polygon points="116,0 116,89 58,44.5" fill="url(#tgr)"/><rect x="17.5" y="13.5" width="81" height="62" rx="7" fill="#000" stroke="#fff" stroke-width="1"/><line x1="58.5" y1="13" x2="58.5" y2="76" stroke="#fff" stroke-width="1" stroke-dasharray="3 2"/><line x1="15" y1="44.5" x2="102" y2="44.5" stroke="#fff" stroke-width="1" stroke-dasharray="3 2"/><ellipse cx="58.5" cy="44.5" rx="21" ry="15" fill="none" stroke="#fff" stroke-width="1" stroke-dasharray="3 2"/></svg>
<div class="a" style="left:221px;top:431px;width:151px;height:576px;background:#f0f0f0;"></div>
<div class="a" style="left:221px;top:431px;width:151px;height:1px;background:#a0a0a0;"></div>
<div class="a" style="left:221px;top:432px;width:151px;height:1px;background:#696969;"></div>
<div class="a" style="left:221px;top:431px;width:1px;height:576px;background:#a0a0a0;"></div>
<div class="a" style="left:222px;top:432px;width:1px;height:575px;background:#696969;"></div>
<div class="a" style="left:223px;top:433px;width:58px;height:21px;background:#f0f0f0;border-top:1px solid #fff;border-left:1px solid #fff"></div>
<div class="a" style="left:223px;top:454px;width:58px;height:1px;background:#696969;"></div>
<div class="a" style="left:282px;top:433px;width:72px;height:21px;background:#fff;"></div>
<div class="a" style="left:282px;top:454px;width:72px;height:1px;background:#c0c0c0;"></div>
<div class="t seg" style="left:223px;top:438px;width:58px;text-align:center;font-size:12px;font-weight:bold;letter-spacing:-0.3px">Y cd/m²</div>
<div class="a" style="left:223px;top:455px;width:58px;height:22px;background:#f0f0f0;border-top:1px solid #fff;border-left:1px solid #fff"></div>
<div class="a" style="left:223px;top:477px;width:58px;height:1px;background:#696969;"></div>
<div class="a" style="left:282px;top:455px;width:72px;height:22px;background:#fff;"></div>
<div class="a" style="left:282px;top:477px;width:72px;height:1px;background:#c0c0c0;"></div>
<div class="t seg" style="left:223px;top:461px;width:58px;text-align:center;font-size:12px;font-weight:bold;letter-spacing:-0.3px">Y ftL</div>
<div class="a" style="left:223px;top:478px;width:58px;height:22px;background:#f0f0f0;border-top:1px solid #fff;border-left:1px solid #fff"></div>
<div class="a" style="left:223px;top:500px;width:58px;height:1px;background:#696969;"></div>
<div class="a" style="left:282px;top:478px;width:72px;height:22px;background:#fff;"></div>
<div class="a" style="left:282px;top:500px;width:72px;height:1px;background:#c0c0c0;"></div>
<div class="t seg" style="left:223px;top:484px;width:58px;text-align:center;font-size:12px;font-weight:bold;letter-spacing:-0.3px">T°</div>
<div class="a" style="left:223px;top:501px;width:58px;height:22px;background:#f0f0f0;border-top:1px solid #fff;border-left:1px solid #fff"></div>
<div class="a" style="left:223px;top:523px;width:58px;height:1px;background:#696969;"></div>
<div class="a" style="left:282px;top:501px;width:72px;height:22px;background:#e0e0e0;"></div>
<div class="a" style="left:282px;top:523px;width:72px;height:1px;background:#c0c0c0;"></div>
<div class="t seg" style="left:223px;top:507px;width:58px;text-align:center;font-size:12px;font-weight:bold;letter-spacing:-0.3px">X</div>
<div class="a" style="left:223px;top:524px;width:58px;height:22px;background:#f0f0f0;border-top:1px solid #fff;border-left:1px solid #fff"></div>
<div class="a" style="left:223px;top:546px;width:58px;height:1px;background:#696969;"></div>
<div class="a" style="left:282px;top:524px;width:72px;height:22px;background:#e0e0e0;"></div>
<div class="a" style="left:282px;top:546px;width:72px;height:1px;background:#c0c0c0;"></div>
<div class="t seg" style="left:223px;top:530px;width:58px;text-align:center;font-size:12px;font-weight:bold;letter-spacing:-0.3px">Y</div>
<div class="a" style="left:223px;top:547px;width:58px;height:22px;background:#f0f0f0;border-top:1px solid #fff;border-left:1px solid #fff"></div>
<div class="a" style="left:223px;top:569px;width:58px;height:1px;background:#696969;"></div>
<div class="a" style="left:282px;top:547px;width:72px;height:22px;background:#e0e0e0;"></div>
<div class="a" style="left:282px;top:569px;width:72px;height:1px;background:#c0c0c0;"></div>
<div class="t seg" style="left:223px;top:553px;width:58px;text-align:center;font-size:12px;font-weight:bold;letter-spacing:-0.3px">Z</div>
<div class="a" style="left:223px;top:570px;width:58px;height:22px;background:#f0f0f0;border-top:1px solid #fff;border-left:1px solid #fff"></div>
<div class="a" style="left:223px;top:592px;width:58px;height:1px;background:#696969;"></div>
<div class="a" style="left:282px;top:570px;width:72px;height:22px;background:#fff;"></div>
<div class="a" style="left:282px;top:592px;width:72px;height:1px;background:#c0c0c0;"></div>
<div class="t seg" style="left:223px;top:576px;width:58px;text-align:center;font-size:12px;font-weight:bold;letter-spacing:-0.3px">R</div>
<div class="a" style="left:223px;top:593px;width:58px;height:22px;background:#f0f0f0;border-top:1px solid #fff;border-left:1px solid #fff"></div>
<div class="a" style="left:223px;top:615px;width:58px;height:1px;background:#696969;"></div>
<div class="a" style="left:282px;top:593px;width:72px;height:22px;background:#fff;"></div>
<div class="a" style="left:282px;top:615px;width:72px;height:1px;background:#c0c0c0;"></div>
<div class="t seg" style="left:223px;top:599px;width:58px;text-align:center;font-size:12px;font-weight:bold;letter-spacing:-0.3px">G</div>
<div class="a" style="left:223px;top:616px;width:58px;height:22px;background:#f0f0f0;border-top:1px solid #fff;border-left:1px solid #fff"></div>
<div class="a" style="left:223px;top:638px;width:58px;height:1px;background:#696969;"></div>
<div class="a" style="left:282px;top:616px;width:72px;height:22px;background:#fff;"></div>
<div class="a" style="left:282px;top:638px;width:72px;height:1px;background:#c0c0c0;"></div>
<div class="t seg" style="left:223px;top:622px;width:58px;text-align:center;font-size:12px;font-weight:bold;letter-spacing:-0.3px">B</div>
<div class="a" style="left:223px;top:639px;width:58px;height:22px;background:#f0f0f0;border-top:1px solid #fff;border-left:1px solid #fff"></div>
<div class="a" style="left:223px;top:661px;width:58px;height:1px;background:#696969;"></div>
<div class="a" style="left:282px;top:639px;width:72px;height:22px;background:#e0e0e0;"></div>
<div class="a" style="left:282px;top:661px;width:72px;height:1px;background:#c0c0c0;"></div>
<div class="t seg" style="left:223px;top:645px;width:58px;text-align:center;font-size:12px;font-weight:bold;letter-spacing:-0.3px">x</div>
<div class="a" style="left:223px;top:662px;width:58px;height:22px;background:#f0f0f0;border-top:1px solid #fff;border-left:1px solid #fff"></div>
<div class="a" style="left:223px;top:684px;width:58px;height:1px;background:#696969;"></div>
<div class="a" style="left:282px;top:662px;width:72px;height:22px;background:#e0e0e0;"></div>
<div class="a" style="left:282px;top:684px;width:72px;height:1px;background:#c0c0c0;"></div>
<div class="t seg" style="left:223px;top:668px;width:58px;text-align:center;font-size:12px;font-weight:bold;letter-spacing:-0.3px">y</div>
<div class="a" style="left:223px;top:685px;width:58px;height:22px;background:#f0f0f0;border-top:1px solid #fff;border-left:1px solid #fff"></div>
<div class="a" style="left:223px;top:707px;width:58px;height:1px;background:#696969;"></div>
<div class="a" style="left:282px;top:685px;width:72px;height:22px;background:#e0e0e0;"></div>
<div class="a" style="left:282px;top:707px;width:72px;height:1px;background:#c0c0c0;"></div>
<div class="t seg" style="left:223px;top:691px;width:58px;text-align:center;font-size:12px;font-weight:bold;letter-spacing:-0.3px">Y</div>
<div class="a" style="left:223px;top:708px;width:58px;height:22px;background:#f0f0f0;border-top:1px solid #fff;border-left:1px solid #fff"></div>
<div class="a" style="left:223px;top:730px;width:58px;height:1px;background:#696969;"></div>
<div class="a" style="left:282px;top:708px;width:72px;height:22px;background:#fff;"></div>
<div class="a" style="left:282px;top:730px;width:72px;height:1px;background:#c0c0c0;"></div>
<div class="t seg" style="left:223px;top:714px;width:58px;text-align:center;font-size:12px;font-weight:bold;letter-spacing:-0.3px">x</div>
<div class="a" style="left:223px;top:731px;width:58px;height:22px;background:#f0f0f0;border-top:1px solid #fff;border-left:1px solid #fff"></div>
<div class="a" style="left:223px;top:753px;width:58px;height:1px;background:#696969;"></div>
<div class="a" style="left:282px;top:731px;width:72px;height:22px;background:#fff;"></div>
<div class="a" style="left:282px;top:753px;width:72px;height:1px;background:#c0c0c0;"></div>
<div class="t seg" style="left:223px;top:737px;width:58px;text-align:center;font-size:12px;font-weight:bold;letter-spacing:-0.3px">y</div>
<div class="a" style="left:223px;top:754px;width:58px;height:22px;background:#f0f0f0;border-top:1px solid #fff;border-left:1px solid #fff"></div>
<div class="a" style="left:223px;top:776px;width:58px;height:1px;background:#696969;"></div>
<div class="a" style="left:282px;top:754px;width:72px;height:22px;background:#fff;"></div>
<div class="a" style="left:282px;top:776px;width:72px;height:1px;background:#c0c0c0;"></div>
<div class="t seg" style="left:223px;top:760px;width:58px;text-align:center;font-size:12px;font-weight:bold;letter-spacing:-0.3px">z</div>
<div class="a" style="left:223px;top:777px;width:58px;height:22px;background:#f0f0f0;border-top:1px solid #fff;border-left:1px solid #fff"></div>
<div class="a" style="left:223px;top:799px;width:58px;height:1px;background:#696969;"></div>
<div class="a" style="left:282px;top:777px;width:72px;height:22px;background:#e0e0e0;"></div>
<div class="a" style="left:282px;top:799px;width:72px;height:1px;background:#c0c0c0;"></div>
<div class="t seg" style="left:223px;top:783px;width:58px;text-align:center;font-size:12px;font-weight:bold;letter-spacing:-0.3px">L</div>
<div class="a" style="left:223px;top:800px;width:58px;height:22px;background:#f0f0f0;border-top:1px solid #fff;border-left:1px solid #fff"></div>
<div class="a" style="left:223px;top:822px;width:58px;height:1px;background:#696969;"></div>
<div class="a" style="left:282px;top:800px;width:72px;height:22px;background:#e0e0e0;"></div>
<div class="a" style="left:282px;top:822px;width:72px;height:1px;background:#c0c0c0;"></div>
<div class="t seg" style="left:223px;top:806px;width:58px;text-align:center;font-size:12px;font-weight:bold;letter-spacing:-0.3px">a</div>
<div class="a" style="left:223px;top:823px;width:58px;height:22px;background:#f0f0f0;border-top:1px solid #fff;border-left:1px solid #fff"></div>
<div class="a" style="left:223px;top:845px;width:58px;height:1px;background:#696969;"></div>
<div class="a" style="left:282px;top:823px;width:72px;height:22px;background:#e0e0e0;"></div>
<div class="a" style="left:282px;top:845px;width:72px;height:1px;background:#c0c0c0;"></div>
<div class="t seg" style="left:223px;top:829px;width:58px;text-align:center;font-size:12px;font-weight:bold;letter-spacing:-0.3px">b</div>
<div class="a" style="left:223px;top:846px;width:58px;height:22px;background:#f0f0f0;border-top:1px solid #fff;border-left:1px solid #fff"></div>
<div class="a" style="left:223px;top:868px;width:58px;height:1px;background:#696969;"></div>
<div class="a" style="left:282px;top:846px;width:72px;height:22px;background:#fff;"></div>
<div class="a" style="left:282px;top:868px;width:72px;height:1px;background:#c0c0c0;"></div>
<div class="t seg" style="left:223px;top:852px;width:58px;text-align:center;font-size:12px;font-weight:bold;letter-spacing:-0.3px">L</div>
<div class="a" style="left:223px;top:869px;width:58px;height:22px;background:#f0f0f0;border-top:1px solid #fff;border-left:1px solid #fff"></div>
<div class="a" style="left:223px;top:891px;width:58px;height:1px;background:#696969;"></div>
<div class="a" style="left:282px;top:869px;width:72px;height:22px;background:#fff;"></div>
<div class="a" style="left:282px;top:891px;width:72px;height:1px;background:#c0c0c0;"></div>
<div class="t seg" style="left:223px;top:875px;width:58px;text-align:center;font-size:12px;font-weight:bold;letter-spacing:-0.3px">C</div>
<div class="a" style="left:223px;top:892px;width:58px;height:22px;background:#f0f0f0;border-top:1px solid #fff;border-left:1px solid #fff"></div>
<div class="a" style="left:223px;top:914px;width:58px;height:1px;background:#696969;"></div>
<div class="a" style="left:282px;top:892px;width:72px;height:22px;background:#fff;"></div>
<div class="a" style="left:282px;top:914px;width:72px;height:1px;background:#c0c0c0;"></div>
<div class="t seg" style="left:223px;top:898px;width:58px;text-align:center;font-size:12px;font-weight:bold;letter-spacing:-0.3px">H</div>
<div class="a" style="left:223px;top:915px;width:58px;height:22px;background:#f0f0f0;border-top:1px solid #fff;border-left:1px solid #fff"></div>
<div class="a" style="left:223px;top:937px;width:58px;height:1px;background:#696969;"></div>
<div class="a" style="left:282px;top:915px;width:72px;height:22px;background:#e0e0e0;"></div>
<div class="a" style="left:282px;top:937px;width:72px;height:1px;background:#c0c0c0;"></div>
<div class="t seg" style="left:223px;top:921px;width:58px;text-align:center;font-size:12px;font-weight:bold;letter-spacing:-0.3px">L</div>
<div class="a" style="left:223px;top:938px;width:58px;height:22px;background:#f0f0f0;border-top:1px solid #fff;border-left:1px solid #fff"></div>
<div class="a" style="left:223px;top:960px;width:58px;height:1px;background:#696969;"></div>
<div class="a" style="left:282px;top:938px;width:72px;height:22px;background:#e0e0e0;"></div>
<div class="a" style="left:282px;top:960px;width:72px;height:1px;background:#c0c0c0;"></div>
<div class="t seg" style="left:223px;top:944px;width:58px;text-align:center;font-size:12px;font-weight:bold;letter-spacing:-0.3px">M</div>
<div class="a" style="left:223px;top:961px;width:58px;height:22px;background:#f0f0f0;border-top:1px solid #fff;border-left:1px solid #fff"></div>
<div class="a" style="left:223px;top:983px;width:58px;height:1px;background:#696969;"></div>
<div class="a" style="left:282px;top:961px;width:72px;height:22px;background:#e0e0e0;"></div>
<div class="a" style="left:282px;top:983px;width:72px;height:1px;background:#c0c0c0;"></div>
<div class="t seg" style="left:223px;top:967px;width:58px;text-align:center;font-size:12px;font-weight:bold;letter-spacing:-0.3px">S</div>
<div class="a" style="left:281px;top:433px;width:1px;height:551px;background:#696969;"></div>
<div class="a" style="left:223px;top:984px;width:131px;height:23px;background:#a0a0a0;"></div>
<div class="a" style="left:354px;top:433px;width:1px;height:574px;background:#fff;"></div>
<svg class="a" style="left:358px;top:435px" width="10" height="10" viewBox="0 0 10 10"><path d="M1 7.5 L5 3.5 L9 7.5" fill="none" stroke="#c4c4c4" stroke-width="1.6"/></svg>
<svg class="a" style="left:358px;top:993px" width="10" height="10" viewBox="0 0 10 10"><path d="M1 2.5 L5 6.5 L9 2.5" fill="none" stroke="#c4c4c4" stroke-width="1.6"/></svg>
<div class="grp" style="left:391px;top:387px;width:1504px;height:629px;"><div class="hd"></div></div>
<div class="t ver" style="left:397.34px;top:392.00px;font-size:11px;font-weight:bold;color:#444;">Information</div>
<div class="sunk" style="left:396px;top:409px;width:302px;height:23px"></div>
<div class="a" style="left:400px;top:413px;width:280px;height:16px;background:#0078d7;"></div>
<div class="t ver" style="left:401.03px;letter-spacing:0.017px;top:416.00px;font-size:12px;color:#fff;">RGB - Gamma</div>
<div class="rais" style="left:680px;top:411px;width:16px;height:19px"></div>
<svg class="a" style="left:684px;top:419px" width="8" height="5"><path d="M0 0H8L4 4.5Z" fill="#000"/></svg>
<div class="a" style="left:398px;top:439px;width:748px;height:569px;background:#fff;"></div>
<div class="a" style="left:398px;top:439px;width:747px;height:1px;background:#808080;"></div>
<div class="a" style="left:398px;top:440px;width:746px;height:1px;background:#696969;"></div>
<div class="a" style="left:399px;top:441px;width:745px;height:1px;background:#a0a0a0;"></div>
<div class="a" style="left:398px;top:439px;width:1px;height:568px;background:#808080;"></div>
<div class="a" style="left:399px;top:440px;width:1px;height:566px;background:#696969;"></div>
<div class="a" style="left:400px;top:441px;width:1px;height:565px;background:#a0a0a0;"></div>
<div class="a" style="left:1142px;top:443px;width:1px;height:563px;background:#e0e0e0;"></div>
<div class="a" style="left:401px;top:1005px;width:742px;height:1px;background:#e0e0e0;"></div>
<div class="a" style="left:401px;top:442px;width:742px;height:1px;background:#646a6a;"></div>
<div class="a" style="left:1146px;top:439px;width:748px;height:569px;background:#fff;"></div>
<div class="a" style="left:1146px;top:439px;width:747px;height:1px;background:#808080;"></div>
<div class="a" style="left:1146px;top:440px;width:746px;height:1px;background:#696969;"></div>
<div class="a" style="left:1147px;top:441px;width:745px;height:1px;background:#a0a0a0;"></div>
<div class="a" style="left:1146px;top:439px;width:1px;height:568px;background:#808080;"></div>
<div class="a" style="left:1147px;top:440px;width:1px;height:566px;background:#696969;"></div>
<div class="a" style="left:1148px;top:441px;width:1px;height:565px;background:#a0a0a0;"></div>
<div class="a" style="left:1890px;top:443px;width:1px;height:563px;background:#e0e0e0;"></div>
<div class="a" style="left:1149px;top:1005px;width:742px;height:1px;background:#e0e0e0;"></div>
<div class="a" style="left:1149px;top:442px;width:742px;height:1px;background:#646a6a;"></div>
<svg class="a" style="left:402px;top:443px" width="740" height="562" viewBox="0 0 740 562" shape-rendering="crispEdges"><defs><linearGradient id="g402" x1="0" x2="1" y1="0" y2="0"><stop offset="0" stop-color="#202020"/><stop offset="1" stop-color="#ffffff"/></linearGradient></defs><rect width="740" height="562" fill="url(#g402)"/><rect x="0" y="0" width="1" height="562" fill="#0b4747"/><rect x="74" y="0" width="1" height="562" fill="#0b4747"/><rect x="148" y="0" width="1" height="562" fill="#0b4747"/><rect x="222" y="0" width="1" height="562" fill="#0b4747"/><rect x="296" y="0" width="1" height="562" fill="#0b4747"/><rect x="370" y="0" width="1" height="562" fill="#0b4747"/><rect x="444" y="0" width="1" height="562" fill="#0b4747"/><rect x="518" y="0" width="1" height="562" fill="#0b4747"/><rect x="592" y="0" width="1" height="562" fill="#0b4747"/><rect x="666" y="0" width="1" height="562" fill="#0b4747"/><rect x="0" y="28" width="740" height="1" fill="#0b4747"/><rect x="0" y="56" width="740" height="1" fill="#0b4747"/><rect x="0" y="84" width="740" height="1" fill="#0b4747"/><rect x="0" y="112" width="740" height="1" fill="#0b4747"/><rect x="0" y="140" width="740" height="1" fill="#0b4747"/><rect x="0" y="168" width="740" height="1" fill="#0b4747"/><rect x="0" y="196" width="740" height="1" fill="#0b4747"/><rect x="0" y="224" width="740" height="1" fill="#0b4747"/><rect x="0" y="252" width="740" height="1" fill="#0b4747"/><rect x="0" y="337" width="740" height="1" fill="#0b4747"/><rect x="0" y="393" width="740" height="1" fill="#0b4747"/><rect x="0" y="449" width="740" height="1" fill="#0b4747"/><rect x="0" y="505" width="740" height="1" fill="#0b4747"/><g shape-rendering="auto"><line x1="0" y1="140.5" x2="740" y2="140.5" stroke="#fff" stroke-width="1" stroke-dasharray="3 3"/><rect x="0" y="136" width="4" height="8" fill="#e6e6e6"/><text x="2.5" y="24" font-family="Liberation Serif,serif" font-size="13.5" fill="#dcdcdc">140%</text><text x="2.5" y="52" font-family="Liberation Serif,serif" font-size="13.5" fill="#dcdcdc">130%</text><text x="2.5" y="80" font-family="Liberation Serif,serif" font-size="13.5" fill="#dcdcdc">120%</text><text x="2.5" y="108" font-family="Liberation Serif,serif" font-size="13.5" fill="#dcdcdc">110%</text><text x="2.5" y="136" font-family="Liberation Serif,serif" font-size="13.5" fill="#dcdcdc">100%</text><text x="2.5" y="164" font-family="Liberation Serif,serif" font-size="13.5" fill="#dcdcdc">90%</text><text x="2.5" y="192" font-family="Liberation Serif,serif" font-size="13.5" fill="#dcdcdc">80%</text><text x="2.5" y="220" font-family="Liberation Serif,serif" font-size="13.5" fill="#dcdcdc">70%</text><text x="2.5" y="248" font-family="Liberation Serif,serif" font-size="13.5" fill="#dcdcdc">60%</text><text x="2.5" y="333" font-family="Liberation Serif,serif" font-size="13.5" fill="#dcdcdc">8</text><text x="2.5" y="389" font-family="Liberation Serif,serif" font-size="13.5" fill="#dcdcdc">6</text><text x="2.5" y="445" font-family="Liberation Serif,serif" font-size="13.5" fill="#dcdcdc">4</text><text x="2.5" y="501" font-family="Liberation Serif,serif" font-size="13.5" fill="#dcdcdc">2</text><text x="77" y="277" font-family="Liberation Serif,serif" font-size="13.5" fill="#ffffff">10% White</text><text x="151" y="277" font-family="Liberation Serif,serif" font-size="13.5" fill="#e0e0e0">20% White</text><text x="225" y="277" font-family="Liberation Serif,serif" font-size="13.5" fill="#c0c0c0">30% White</text><text x="299" y="277" font-family="Liberation Serif,serif" font-size="13.5" fill="#a0a0a0">40% White</text><text x="373" y="277" font-family="Liberation Serif,serif" font-size="13.5" fill="#808080">50% White</text><text x="447" y="277" font-family="Liberation Serif,serif" font-size="13.5" fill="#606060">60% White</text><text x="521" y="277" font-family="Liberation Serif,serif" font-size="13.5" fill="#404040">70% White</text><text x="595" y="277" font-family="Liberation Serif,serif" font-size="13.5" fill="#202020">80% White</text><text x="669" y="277" font-family="Liberation Serif,serif" font-size="13.5" fill="#000000">90% White</text><text x="77" y="558" font-family="Liberation Serif,serif" font-size="13.5" fill="#ffffff">10% White</text><text x="151" y="558" font-family="Liberation Serif,serif" font-size="13.5" fill="#e0e0e0">20% White</text><text x="225" y="558" font-family="Liberation Serif,serif" font-size="13.5" fill="#c0c0c0">30% White</text><text x="299" y="558" font-family="Liberation Serif,serif" font-size="13.5" fill="#a0a0a0">40% White</text><text x="373" y="558" font-family="Liberation Serif,serif" font-size="13.5" fill="#808080">50% White</text><text x="447" y="558" font-family="Liberation Serif,serif" font-size="13.5" fill="#606060">60% White</text><text x="521" y="558" font-family="Liberation Serif,serif" font-size="13.5" fill="#404040">70% White</text><text x="595" y="558" font-family="Liberation Serif,serif" font-size="13.5" fill="#202020">80% White</text><text x="669" y="558" font-family="Liberation Serif,serif" font-size="13.5" fill="#000000">90% White</text><polyline points="33.0,225.0 70.1,174.0 107.2,142.0 144.3,122.8 181.4,136.7 218.5,142.8 255.6,142.0 292.7,131.8 329.8,136.8 366.9,140.8 404.0,143.8 441.1,136.8 478.2,138.0 515.3,143.0 552.4,146.0 589.5,144.0 626.6,139.0 663.7,139.0 700.8,142.0 737.9,143.0" fill="none" stroke="#00ff00" stroke-width="2"/><rect x="29" y="221" width="8" height="8" fill="#00ff00"/><rect x="66" y="170" width="8" height="8" fill="#00ff00"/><rect x="103" y="138" width="8" height="8" fill="#00ff00"/><rect x="140" y="119" width="8" height="8" fill="#00ff00"/><rect x="177" y="133" width="8" height="8" fill="#00ff00"/><rect x="214" y="139" width="8" height="8" fill="#00ff00"/><rect x="252" y="138" width="8" height="8" fill="#00ff00"/><rect x="289" y="128" width="8" height="8" fill="#00ff00"/><rect x="326" y="133" width="8" height="8" fill="#00ff00"/><rect x="363" y="137" width="8" height="8" fill="#00ff00"/><rect x="400" y="140" width="8" height="8" fill="#00ff00"/><rect x="437" y="133" width="8" height="8" fill="#00ff00"/><rect x="474" y="134" width="8" height="8" fill="#00ff00"/><rect x="511" y="139" width="8" height="8" fill="#00ff00"/><rect x="548" y="142" width="8" height="8" fill="#00ff00"/><rect x="586" y="140" width="8" height="8" fill="#00ff00"/><rect x="623" y="135" width="8" height="8" fill="#00ff00"/><rect x="660" y="135" width="8" height="8" fill="#00ff00"/><rect x="697" y="138" width="8" height="8" fill="#00ff00"/><rect x="734" y="139" width="8" height="8" fill="#00ff00"/><polyline points="33.0,157.8 70.1,172.0 107.2,140.0 144.3,125.0 181.4,135.7 218.5,138.7 255.6,135.0 292.7,126.8 329.8,131.0 366.9,136.8 404.0,139.8 441.1,133.8 478.2,134.8 515.3,139.8 552.4,143.8 589.5,141.0 626.6,135.0 663.7,134.0 700.8,139.0 737.9,139.0" fill="none" stroke="#0000ff" stroke-width="2"/><rect x="29" y="154" width="8" height="8" fill="#0000ff"/><rect x="66" y="168" width="8" height="8" fill="#0000ff"/><rect x="103" y="136" width="8" height="8" fill="#0000ff"/><rect x="140" y="121" width="8" height="8" fill="#0000ff"/><rect x="177" y="132" width="8" height="8" fill="#0000ff"/><rect x="214" y="135" width="8" height="8" fill="#0000ff"/><rect x="252" y="131" width="8" height="8" fill="#0000ff"/><rect x="289" y="123" width="8" height="8" fill="#0000ff"/><rect x="326" y="127" width="8" height="8" fill="#0000ff"/><rect x="363" y="133" width="8" height="8" fill="#0000ff"/><rect x="400" y="136" width="8" height="8" fill="#0000ff"/><rect x="437" y="130" width="8" height="8" fill="#0000ff"/><rect x="474" y="131" width="8" height="8" fill="#0000ff"/><rect x="511" y="136" width="8" height="8" fill="#0000ff"/><rect x="548" y="140" width="8" height="8" fill="#0000ff"/><rect x="586" y="137" width="8" height="8" fill="#0000ff"/><rect x="623" y="131" width="8" height="8" fill="#0000ff"/><rect x="660" y="130" width="8" height="8" fill="#0000ff"/><rect x="697" y="135" width="8" height="8" fill="#0000ff"/><rect x="734" y="135" width="8" height="8" fill="#0000ff"/><polyline points="33.0,137.0 70.1,151.2 107.2,125.0 144.3,112.8 181.4,127.0 218.5,135.0 255.6,129.0 292.7,124.8 329.8,129.0 366.9,135.2 404.0,136.0 441.1,128.0 478.2,128.0 515.3,131.8 552.4,135.2 589.5,132.0 626.6,129.0 663.7,128.0 700.8,131.0 737.9,131.0" fill="none" stroke="#ff0000" stroke-width="2"/><rect x="29" y="133" width="8" height="8" fill="#ff0000"/><rect x="66" y="147" width="8" height="8" fill="#ff0000"/><rect x="103" y="121" width="8" height="8" fill="#ff0000"/><rect x="140" y="109" width="8" height="8" fill="#ff0000"/><rect x="177" y="123" width="8" height="8" fill="#ff0000"/><rect x="214" y="131" width="8" height="8" fill="#ff0000"/><rect x="252" y="125" width="8" height="8" fill="#ff0000"/><rect x="289" y="121" width="8" height="8" fill="#ff0000"/><rect x="326" y="125" width="8" height="8" fill="#ff0000"/><rect x="363" y="131" width="8" height="8" fill="#ff0000"/><rect x="400" y="132" width="8" height="8" fill="#ff0000"/><rect x="437" y="124" width="8" height="8" fill="#ff0000"/><rect x="474" y="124" width="8" height="8" fill="#ff0000"/><rect x="511" y="128" width="8" height="8" fill="#ff0000"/><rect x="548" y="131" width="8" height="8" fill="#ff0000"/><rect x="586" y="128" width="8" height="8" fill="#ff0000"/><rect x="623" y="125" width="8" height="8" fill="#ff0000"/><rect x="660" y="124" width="8" height="8" fill="#ff0000"/><rect x="697" y="127" width="8" height="8" fill="#ff0000"/><rect x="734" y="127" width="8" height="8" fill="#ff0000"/><polyline points="33.0,551.0 70.1,549.0 107.2,541.0 144.3,542.0 181.4,542.0 218.5,540.0 255.6,524.0 292.7,531.2 329.8,532.8 366.9,537.2 404.0,528.8 441.1,525.0 478.2,517.8 515.3,510.4 552.4,509.0 589.5,504.0 626.6,504.5 663.7,496.6 700.8,494.6 737.9,492.2" fill="none" stroke="#ff00ff" stroke-width="2"/><rect x="29" y="547" width="8" height="8" fill="#ff00ff"/><rect x="66" y="545" width="8" height="8" fill="#ff00ff"/><rect x="103" y="537" width="8" height="8" fill="#ff00ff"/><rect x="140" y="538" width="8" height="8" fill="#ff00ff"/><rect x="177" y="538" width="8" height="8" fill="#ff00ff"/><rect x="214" y="536" width="8" height="8" fill="#ff00ff"/><rect x="252" y="520" width="8" height="8" fill="#ff00ff"/><rect x="289" y="527" width="8" height="8" fill="#ff00ff"/><rect x="326" y="529" width="8" height="8" fill="#ff00ff"/><rect x="363" y="533" width="8" height="8" fill="#ff00ff"/><rect x="400" y="525" width="8" height="8" fill="#ff00ff"/><rect x="437" y="521" width="8" height="8" fill="#ff00ff"/><rect x="474" y="514" width="8" height="8" fill="#ff00ff"/><rect x="511" y="506" width="8" height="8" fill="#ff00ff"/><rect x="548" y="505" width="8" height="8" fill="#ff00ff"/><rect x="586" y="500" width="8" height="8" fill="#ff00ff"/><rect x="623" y="500" width="8" height="8" fill="#ff00ff"/><rect x="660" y="493" width="8" height="8" fill="#ff00ff"/><rect x="697" y="491" width="8" height="8" fill="#ff00ff"/><rect x="734" y="488" width="8" height="8" fill="#ff00ff"/><text x="279" y="14" font-family="Liberation Sans,sans-serif" font-weight="bold" font-size="14.5" fill="#dede10">Gray Scale Balance w/gamma</text><text x="575" y="519.5" font-family="Liberation Sans,sans-serif" font-weight="bold" font-size="16" fill="#999">hcfr.sourceforge.net</text></g></svg>
<svg class="a" style="left:1150px;top:443px" width="740" height="562" viewBox="0 0 740 562" shape-rendering="crispEdges"><defs><linearGradient id="g1150" x1="0" x2="1" y1="0" y2="0"><stop offset="0" stop-color="#202020"/><stop offset="1" stop-color="#ffffff"/></linearGradient></defs><rect width="740" height="562" fill="url(#g1150)"/><rect x="0" y="0" width="1" height="562" fill="#0b4747"/><rect x="74" y="0" width="1" height="562" fill="#0b4747"/><rect x="148" y="0" width="1" height="562" fill="#0b4747"/><rect x="222" y="0" width="1" height="562" fill="#0b4747"/><rect x="296" y="0" width="1" height="562" fill="#0b4747"/><rect x="370" y="0" width="1" height="562" fill="#0b4747"/><rect x="444" y="0" width="1" height="562" fill="#0b4747"/><rect x="518" y="0" width="1" height="562" fill="#0b4747"/><rect x="592" y="0" width="1" height="562" fill="#0b4747"/><rect x="666" y="0" width="1" height="562" fill="#0b4747"/><rect x="0" y="28" width="740" height="1" fill="#0b4747"/><rect x="0" y="56" width="740" height="1" fill="#0b4747"/><rect x="0" y="84" width="740" height="1" fill="#0b4747"/><rect x="0" y="112" width="740" height="1" fill="#0b4747"/><rect x="0" y="140" width="740" height="1" fill="#0b4747"/><rect x="0" y="168" width="740" height="1" fill="#0b4747"/><rect x="0" y="196" width="740" height="1" fill="#0b4747"/><rect x="0" y="224" width="740" height="1" fill="#0b4747"/><rect x="0" y="252" width="740" height="1" fill="#0b4747"/><rect x="0" y="281" width="740" height="1" fill="#0b4747"/><rect x="0" y="309" width="740" height="1" fill="#0b4747"/><rect x="0" y="337" width="740" height="1" fill="#0b4747"/><rect x="0" y="365" width="740" height="1" fill="#0b4747"/><rect x="0" y="393" width="740" height="1" fill="#0b4747"/><rect x="0" y="421" width="740" height="1" fill="#0b4747"/><rect x="0" y="449" width="740" height="1" fill="#0b4747"/><rect x="0" y="477" width="740" height="1" fill="#0b4747"/><rect x="0" y="505" width="740" height="1" fill="#0b4747"/><rect x="0" y="533" width="740" height="1" fill="#0b4747"/><g shape-rendering="auto"><line x1="33" y1="168.5" x2="702" y2="168.5" stroke="#fff" stroke-width="1" stroke-dasharray="3 3"/><polyline points="33.0,146.2 70.1,154.7 107.2,169.5 144.3,179.4 181.4,172.9 218.5,167.8 255.6,169.5 292.7,178.1 329.8,175.1 366.9,169.2 404.0,165.8 441.1,179.4 478.2,179.4 515.3,167.6 552.4,156.1 589.5,161.6 626.6,188.0 663.7,202.2 700.8,174.5" fill="none" stroke="#ffff00" stroke-width="2"/><rect x="29" y="142" width="8" height="8" fill="#ffff00"/><rect x="66" y="151" width="8" height="8" fill="#ffff00"/><rect x="103" y="166" width="8" height="8" fill="#ffff00"/><rect x="140" y="175" width="8" height="8" fill="#ffff00"/><rect x="177" y="169" width="8" height="8" fill="#ffff00"/><rect x="214" y="164" width="8" height="8" fill="#ffff00"/><rect x="252" y="166" width="8" height="8" fill="#ffff00"/><rect x="289" y="174" width="8" height="8" fill="#ffff00"/><rect x="326" y="171" width="8" height="8" fill="#ffff00"/><rect x="363" y="165" width="8" height="8" fill="#ffff00"/><rect x="400" y="162" width="8" height="8" fill="#ffff00"/><rect x="437" y="175" width="8" height="8" fill="#ffff00"/><rect x="474" y="175" width="8" height="8" fill="#ffff00"/><rect x="511" y="164" width="8" height="8" fill="#ffff00"/><rect x="548" y="152" width="8" height="8" fill="#ffff00"/><rect x="586" y="158" width="8" height="8" fill="#ffff00"/><rect x="623" y="184" width="8" height="8" fill="#ffff00"/><rect x="660" y="198" width="8" height="8" fill="#ffff00"/><rect x="697" y="170" width="8" height="8" fill="#ffff00"/><rect x="29" y="165" width="8" height="8" fill="#e6e6e6"/><rect x="66" y="165" width="8" height="8" fill="#e6e6e6"/><rect x="103" y="165" width="8" height="8" fill="#e6e6e6"/><rect x="140" y="165" width="8" height="8" fill="#e6e6e6"/><rect x="177" y="165" width="8" height="8" fill="#e6e6e6"/><rect x="214" y="165" width="8" height="8" fill="#e6e6e6"/><rect x="252" y="165" width="8" height="8" fill="#e6e6e6"/><rect x="289" y="165" width="8" height="8" fill="#e6e6e6"/><rect x="326" y="165" width="8" height="8" fill="#e6e6e6"/><rect x="363" y="165" width="8" height="8" fill="#e6e6e6"/><rect x="400" y="165" width="8" height="8" fill="#e6e6e6"/><rect x="437" y="165" width="8" height="8" fill="#e6e6e6"/><rect x="474" y="165" width="8" height="8" fill="#e6e6e6"/><rect x="511" y="165" width="8" height="8" fill="#e6e6e6"/><rect x="548" y="165" width="8" height="8" fill="#e6e6e6"/><rect x="586" y="165" width="8" height="8" fill="#e6e6e6"/><rect x="623" y="165" width="8" height="8" fill="#e6e6e6"/><rect x="660" y="165" width="8" height="8" fill="#e6e6e6"/><rect x="697" y="165" width="8" height="8" fill="#e6e6e6"/><text x="2.5" y="24" font-family="Liberation Serif,serif" font-size="13.5" fill="#dcdcdc">2.9</text><text x="2.5" y="52" font-family="Liberation Serif,serif" font-size="13.5" fill="#dcdcdc">2.8</text><text x="2.5" y="80" font-family="Liberation Serif,serif" font-size="13.5" fill="#dcdcdc">2.7</text><text x="2.5" y="108" font-family="Liberation Serif,serif" font-size="13.5" fill="#dcdcdc">2.6</text><text x="2.5" y="136" font-family="Liberation Serif,serif" font-size="13.5" fill="#dcdcdc">2.5</text><text x="2.5" y="164" font-family="Liberation Serif,serif" font-size="13.5" fill="#dcdcdc">2.4</text><text x="2.5" y="192" font-family="Liberation Serif,serif" font-size="13.5" fill="#dcdcdc">2.3</text><text x="2.5" y="220" font-family="Liberation Serif,serif" font-size="13.5" fill="#dcdcdc">2.2</text><text x="2.5" y="248" font-family="Liberation Serif,serif" font-size="13.5" fill="#dcdcdc">2.1</text><text x="2.5" y="277" font-family="Liberation Serif,serif" font-size="13.5" fill="#dcdcdc">2</text><text x="2.5" y="305" font-family="Liberation Serif,serif" font-size="13.5" fill="#dcdcdc">1.9</text><text x="2.5" y="333" font-family="Liberation Serif,serif" font-size="13.5" fill="#dcdcdc">1.8</text><text x="2.5" y="361" font-family="Liberation Serif,serif" font-size="13.5" fill="#dcdcdc">1.7</text><text x="2.5" y="389" font-family="Liberation Serif,serif" font-size="13.5" fill="#dcdcdc">1.6</text><text x="2.5" y="417" font-family="Liberation Serif,serif" font-size="13.5" fill="#dcdcdc">1.5</text><text x="2.5" y="445" font-family="Liberation Serif,serif" font-size="13.5" fill="#dcdcdc">1.4</text><text x="2.5" y="473" font-family="Liberation Serif,serif" font-size="13.5" fill="#dcdcdc">1.3</text><text x="2.5" y="501" font-family="Liberation Serif,serif" font-size="13.5" fill="#dcdcdc">1.2</text><text x="2.5" y="529" font-family="Liberation Serif,serif" font-size="13.5" fill="#dcdcdc">1.1</text><text x="77" y="558" font-family="Liberation Serif,serif" font-size="13.5" fill="#ffffff">10% White</text><text x="151" y="558" font-family="Liberation Serif,serif" font-size="13.5" fill="#e0e0e0">20% White</text><text x="225" y="558" font-family="Liberation Serif,serif" font-size="13.5" fill="#c0c0c0">30% White</text><text x="299" y="558" font-family="Liberation Serif,serif" font-size="13.5" fill="#a0a0a0">40% White</text><text x="373" y="558" font-family="Liberation Serif,serif" font-size="13.5" fill="#808080">50% White</text><text x="447" y="558" font-family="Liberation Serif,serif" font-size="13.5" fill="#606060">60% White</text><text x="521" y="558" font-family="Liberation Serif,serif" font-size="13.5" fill="#404040">70% White</text><text x="595" y="558" font-family="Liberation Serif,serif" font-size="13.5" fill="#202020">80% White</text><text x="669" y="558" font-family="Liberation Serif,serif" font-size="13.5" fill="#000000">90% White</text><text x="331" y="14" font-family="Liberation Sans,sans-serif" font-weight="bold" font-size="14.5" fill="#dede10">EOTF(Gamma)</text><text x="575" y="519.5" font-family="Liberation Sans,sans-serif" font-weight="bold" font-size="16" fill="#999">hcfr.sourceforge.net</text></g></svg>
<div class="a" style="left:1px;top:49px;width:341px;height:41px;background:linear-gradient(#f0f4fa,#eaeff6 40%,#dfe4ec 68%,#c8cfd9);border-radius:2px 2px 5px 5px"></div>
<div class="a" style="left:353px;top:49px;width:251px;height:41px;background:linear-gradient(#f0f4fa,#eaeff6 40%,#dfe4ec 68%,#c8cfd9);border-radius:2px 2px 5px 5px"></div>
<div class="a" style="left:609px;top:49px;width:470px;height:41px;background:linear-gradient(#f0f4fa,#eaeff6 40%,#dfe4ec 68%,#c8cfd9);border-radius:2px 2px 5px 5px"></div>
<svg class="a" style="left:0;top:46px" width="1100" height="46" viewBox="0 46 1100 46"><defs><linearGradient id="mside" x1="0" x2="1" y1="0" y2="0"><stop offset="0" stop-color="#8ea2b8"/><stop offset="0.45" stop-color="#4b5866"/><stop offset="1" stop-color="#252c34"/></linearGradient><linearGradient id="mbez" x1="0" x2="1" y1="0" y2="0"><stop offset="0" stop-color="#dbe5f0"/><stop offset="0.5" stop-color="#9fb5cf"/><stop offset="1" stop-color="#6b89ad"/></linearGradient><linearGradient id="doc" x1="0" x2="1" y1="0" y2="1"><stop offset="0" stop-color="#ffffff"/><stop offset="0.45" stop-color="#e4ebfc"/><stop offset="0.5" stop-color="#cddcf8"/><stop offset="1" stop-color="#bfd2f6"/></linearGradient><linearGradient id="fold" x1="0" x2="0" y1="0" y2="1"><stop offset="0" stop-color="#fff7b0"/><stop offset="0.6" stop-color="#ffd83a"/><stop offset="1" stop-color="#e8a800"/></linearGradient><linearGradient id="clipb" x1="0" x2="1" y1="0" y2="0"><stop offset="0" stop-color="#fff0a0"/><stop offset="0.5" stop-color="#f0c030"/><stop offset="1" stop-color="#d8a010"/></linearGradient><linearGradient id="play" x1="0" x2="1" y1="0" y2="1"><stop offset="0" stop-color="#8fe4a0"/><stop offset="0.5" stop-color="#3fd060"/><stop offset="1" stop-color="#18b838"/></linearGradient><radialGradient id="help" cx="0.4" cy="0.3" r="0.8"><stop offset="0" stop-color="#5a8ae8"/><stop offset="1" stop-color="#1c4cc4"/></radialGradient><linearGradient id="cam" x1="0" x2="1" y1="0" y2="1"><stop offset="0" stop-color="#f4f4f4"/><stop offset="0.6" stop-color="#c8c8c8"/><stop offset="1" stop-color="#909090"/></linearGradient></defs><rect x="6" y="55" width="2" height="2" fill="#fff"/><rect x="5" y="54" width="2" height="2" fill="#7a9cc4"/><rect x="6" y="59" width="2" height="2" fill="#fff"/><rect x="5" y="58" width="2" height="2" fill="#7a9cc4"/><rect x="6" y="63" width="2" height="2" fill="#fff"/><rect x="5" y="62" width="2" height="2" fill="#7a9cc4"/><rect x="6" y="67" width="2" height="2" fill="#fff"/><rect x="5" y="66" width="2" height="2" fill="#7a9cc4"/><rect x="6" y="71" width="2" height="2" fill="#fff"/><rect x="5" y="70" width="2" height="2" fill="#7a9cc4"/><rect x="6" y="75" width="2" height="2" fill="#fff"/><rect x="5" y="74" width="2" height="2" fill="#7a9cc4"/><rect x="6" y="79" width="2" height="2" fill="#fff"/><rect x="5" y="78" width="2" height="2" fill="#7a9cc4"/><rect x="6" y="83" width="2" height="2" fill="#fff"/><rect x="5" y="82" width="2" height="2" fill="#7a9cc4"/><rect x="358" y="55" width="2" height="2" fill="#fff"/><rect x="357" y="54" width="2" height="2" fill="#7a9cc4"/><rect x="358" y="59" width="2" height="2" fill="#fff"/><rect x="357" y="58" width="2" height="2" fill="#7a9cc4"/><rect x="358" y="63" width="2" height="2" fill="#fff"/><rect x="357" y="62" width="2" height="2" fill="#7a9cc4"/><rect x="358" y="67" width="2" height="2" fill="#fff"/><rect x="357" y="66" width="2" height="2" fill="#7a9cc4"/><rect x="358" y="71" width="2" height="2" fill="#fff"/><rect x="357" y="70" width="2" height="2" fill="#7a9cc4"/><rect x="358" y="75" width="2" height="2" fill="#fff"/><rect x="357" y="74" width="2" height="2" fill="#7a9cc4"/><rect x="358" y="79" width="2" height="2" fill="#fff"/><rect x="357" y="78" width="2" height="2" fill="#7a9cc4"/><rect x="358" y="83" width="2" height="2" fill="#fff"/><rect x="357" y="82" width="2" height="2" fill="#7a9cc4"/><rect x="614" y="55" width="2" height="2" fill="#fff"/><rect x="613" y="54" width="2" height="2" fill="#7a9cc4"/><rect x="614" y="59" width="2" height="2" fill="#fff"/><rect x="613" y="58" width="2" height="2" fill="#7a9cc4"/><rect x="614" y="63" width="2" height="2" fill="#fff"/><rect x="613" y="62" width="2" height="2" fill="#7a9cc4"/><rect x="614" y="67" width="2" height="2" fill="#fff"/><rect x="613" y="66" width="2" height="2" fill="#7a9cc4"/><rect x="614" y="71" width="2" height="2" fill="#fff"/><rect x="613" y="70" width="2" height="2" fill="#7a9cc4"/><rect x="614" y="75" width="2" height="2" fill="#fff"/><rect x="613" y="74" width="2" height="2" fill="#7a9cc4"/><rect x="614" y="79" width="2" height="2" fill="#fff"/><rect x="613" y="78" width="2" height="2" fill="#7a9cc4"/><rect x="614" y="83" width="2" height="2" fill="#fff"/><rect x="613" y="82" width="2" height="2" fill="#7a9cc4"/><rect x="129" y="53" width="1" height="32" fill="#b8c2d0"/><rect x="130" y="54" width="1" height="32" fill="#fff"/><rect x="252" y="53" width="1" height="32" fill="#b8c2d0"/><rect x="253" y="54" width="1" height="32" fill="#fff"/><rect x="297" y="53" width="1" height="32" fill="#b8c2d0"/><rect x="298" y="54" width="1" height="32" fill="#fff"/><rect x="520" y="53" width="1" height="32" fill="#b8c2d0"/><rect x="521" y="54" width="1" height="32" fill="#fff"/><rect x="660" y="53" width="1" height="32" fill="#b8c2d0"/><rect x="661" y="54" width="1" height="32" fill="#fff"/><rect x="821" y="53" width="1" height="32" fill="#b8c2d0"/><rect x="822" y="54" width="1" height="32" fill="#fff"/><rect x="866" y="53" width="1" height="32" fill="#b8c2d0"/><rect x="867" y="54" width="1" height="32" fill="#fff"/><rect x="951" y="53" width="1" height="32" fill="#b8c2d0"/><rect x="952" y="54" width="1" height="32" fill="#fff"/><rect x="1034" y="53" width="1" height="32" fill="#b8c2d0"/><rect x="1035" y="54" width="1" height="32" fill="#fff"/><path d="M19.5 57.5 H32 L36.5 62 V79.5 H19.5 Z" fill="url(#doc)" stroke="#5b78b4" stroke-width="1"/><path d="M32 57.5 V62 H36.5" fill="#eef3ff" stroke="#5b78b4" stroke-width="0.8"/><path d="M56 79.5 V63 Q56 61 58 60.5 L62 59.5 Q63.5 59.3 64.5 60.5 L65.5 62 H73 V66 L56.5 79.5Z" fill="#ffe98a" stroke="#d9a400" stroke-width="0.9"/><path d="M56.5 79.5 L60 68.5 Q64 66 67 67.5 Q70 69 73 66.5 L78.5 66 L74 76.5 Z" fill="url(#fold)" stroke="#d9a400" stroke-width="0.9"/><path d="M64.5 60.5 Q72 57.5 74.5 65 L77.5 64.5 L73 70.5 L68 66.5 L71 66 Q69.5 61.5 64.5 60.5Z" fill="#3cc43c" stroke="#1f8f1f" stroke-width="0.8"/><path d="M96.5 60 Q96.5 59.3 97.3 59.3 H115.5 L117 60.8 V80 Q117 80.7 116.3 80.7 H97.3 Q96.5 80.7 96.5 80Z" fill="#6466c8" stroke="#4a4cae" stroke-width="0.8"/><rect x="99.3" y="59.6" width="14.2" height="10" fill="#f2f2f4"/><path d="M101 62.5H112M101 64.5H112M101 66.5H112" stroke="#b0b0b8" stroke-width="0.8"/><rect x="102" y="73" width="9.5" height="7.6" fill="#e8e8ec"/><path d="M103 73.6H106.5V79L103 79.8Z" fill="#4a4cae"/><path d="M111 74 L105 80.5 H111Z" fill="#b8b8c0"/><path d="M144.8 59 L146 59.2 L153 72.8 L151 74.6 Z" fill="#7c8898" stroke="#4e5a6c" stroke-width="0.5"/><path d="M157.2 59 L156 59.2 L149 72.8 L151 74.6 Z" fill="#c8d0dc" stroke="#5a6678" stroke-width="0.5"/><ellipse cx="146.8" cy="76.6" rx="2.6" ry="3.3" transform="rotate(-32 146.8 76.6)" fill="none" stroke="#0f3fae" stroke-width="2.3"/><ellipse cx="155.2" cy="76.6" rx="2.6" ry="3.3" transform="rotate(32 155.2 76.6)" fill="none" stroke="#0f3fae" stroke-width="2.3"/><path d="M148.6 74.2 L151 71.2 L153.4 74.2" stroke="#0f3fae" stroke-width="2" fill="none"/><path d="M179.5 58.5 H189 L192.5 62 V74.5 H179.5 Z" fill="url(#doc)" stroke="#7474b4" stroke-width="1"/><path d="M189 58.5 V62 H192.5" fill="#eef3ff" stroke="#7474b4" stroke-width="0.8"/><path d="M186.5 64.5 H196 L199.5 68 V80.5 H186.5 Z" fill="url(#doc)" stroke="#7474b4" stroke-width="1"/><path d="M196 64.5 V68 H199.5" fill="#eef3ff" stroke="#7474b4" stroke-width="0.8"/><rect x="218.5" y="59.5" width="17.5" height="20.5" rx="2.5" fill="url(#clipb)" stroke="#d09c10" stroke-width="0.9"/><path d="M222 62 L223 58.6 H230.5 L231.5 62Z" fill="#c4c8d0" stroke="#8e94a0" stroke-width="0.7"/><path d="M224.5 65.5 H234 L237.5 69 V81.5 H224.5 Z" fill="url(#doc)" stroke="#7474b4" stroke-width="1"/><path d="M234 65.5 V69 H237.5" fill="#eef3ff" stroke="#7474b4" stroke-width="0.8"/><path d="M266.5 67 L267.5 59.6 H275 L276.5 67Z" fill="#fff" stroke="#8aa4cc" stroke-width="0.7"/><path d="M263 70 Q262.5 66.5 266 66 L279 65 Q284 65.5 284.5 69.5 V74 Q284 77 280 77 H266 Q262.6 76.5 263 73Z" fill="#7aa2dc" stroke="#4c78bc" stroke-width="0.8"/><path d="M265 69 L269 67 L272 72 L267 74.5Z" fill="#c4d8f4"/><path d="M277 66.8 L282.5 69 L280.5 73.5 L276 71.5Z" fill="#b4ccf0"/><path d="M269.5 67.5 L277.5 66.2 L279 72 L271.5 74Z" fill="#d4d8dc" stroke="#9aa0a8" stroke-width="0.5"/><path d="M271.3 68 L276.6 67.2 L277.2 69.6 L272 70.6Z" fill="#222"/><path d="M271 76 L280 75 L284.5 79 L274.5 81Z" fill="#eaf6ff" stroke="#58a0e0" stroke-width="0.8"/><circle cx="320.7" cy="70.7" r="11.3" fill="#fff" stroke="#5474b8" stroke-width="0.9"/><circle cx="320.7" cy="70.7" r="10" fill="url(#help)"/><path d="M316.8 67.2 Q316.8 63 320.9 63 Q325 63 325 66.6 Q325 69 322.6 70.3 Q321.6 71 321.6 73 H319.6 Q319.4 70.2 321 69 Q322.6 67.9 322.6 66.7 Q322.6 65.1 320.9 65.1 Q319.2 65.1 319.1 67.2Z" fill="#fff" stroke="#fff" stroke-width="0.9"/><circle cx="320.6" cy="76.6" r="1.7" fill="#fff"/><defs><radialGradient id="b1" cx="0.38" cy="0.3" r="0.75"><stop offset="0" stop-color="#fff" stop-opacity="0.85"/><stop offset="0.35" stop-color="#474747"/><stop offset="1" stop-color="#474747"/></radialGradient><radialGradient id="b2" cx="0.38" cy="0.3" r="0.75"><stop offset="0" stop-color="#fff" stop-opacity="0.85"/><stop offset="0.35" stop-color="#7c7c7c"/><stop offset="1" stop-color="#7c7c7c"/></radialGradient><radialGradient id="b3" cx="0.38" cy="0.3" r="0.75"><stop offset="0" stop-color="#fff" stop-opacity="0.85"/><stop offset="0.35" stop-color="#a4a4a4"/><stop offset="1" stop-color="#a4a4a4"/></radialGradient><radialGradient id="b4" cx="0.38" cy="0.3" r="0.75"><stop offset="0" stop-color="#fff" stop-opacity="0.85"/><stop offset="0.35" stop-color="#bdbdbd"/><stop offset="1" stop-color="#bdbdbd"/></radialGradient><radialGradient id="b5" cx="0.38" cy="0.3" r="0.75"><stop offset="0" stop-color="#fff" stop-opacity="0.85"/><stop offset="0.35" stop-color="#cfcfcf"/><stop offset="1" stop-color="#cfcfcf"/></radialGradient><radialGradient id="b6" cx="0.38" cy="0.3" r="0.75"><stop offset="0" stop-color="#fff" stop-opacity="0.85"/><stop offset="0.35" stop-color="#dedede"/><stop offset="1" stop-color="#dedede"/></radialGradient></defs><circle cx="390.7" cy="76.7" r="8.2" fill="#474747"/><circle cx="390.7" cy="76.7" r="8.2" fill="url(#b1)"/><circle cx="390.7" cy="76.7" r="8.2" fill="none" stroke="#000" stroke-opacity="0.18" stroke-width="0.8"/><circle cx="383.3" cy="76" r="7" fill="#7c7c7c"/><circle cx="383.3" cy="76" r="7" fill="url(#b2)"/><circle cx="383.3" cy="76" r="7" fill="none" stroke="#000" stroke-opacity="0.18" stroke-width="0.8"/><circle cx="376.7" cy="72" r="6" fill="#a4a4a4"/><circle cx="376.7" cy="72" r="6" fill="url(#b3)"/><circle cx="376.7" cy="72" r="6" fill="none" stroke="#000" stroke-opacity="0.18" stroke-width="0.8"/><circle cx="369.7" cy="70.7" r="4.7" fill="#bdbdbd"/><circle cx="369.7" cy="70.7" r="4.7" fill="url(#b4)"/><circle cx="369.7" cy="70.7" r="4.7" fill="none" stroke="#000" stroke-opacity="0.18" stroke-width="0.8"/><circle cx="369.7" cy="62" r="4.7" fill="#cfcfcf"/><circle cx="369.7" cy="62" r="4.7" fill="url(#b5)"/><circle cx="369.7" cy="62" r="4.7" fill="none" stroke="#000" stroke-opacity="0.18" stroke-width="0.8"/><circle cx="376.3" cy="57.7" r="4.7" fill="#dedede"/><circle cx="376.3" cy="57.7" r="4.7" fill="url(#b6)"/><circle cx="376.3" cy="57.7" r="4.7" fill="none" stroke="#000" stroke-opacity="0.18" stroke-width="0.8"/><defs><radialGradient id="b7" cx="0.38" cy="0.3" r="0.75"><stop offset="0" stop-color="#fff" stop-opacity="0.85"/><stop offset="0.35" stop-color="#d8002c"/><stop offset="1" stop-color="#d8002c"/></radialGradient><radialGradient id="b8" cx="0.38" cy="0.3" r="0.75"><stop offset="0" stop-color="#fff" stop-opacity="0.85"/><stop offset="0.35" stop-color="#44d400"/><stop offset="1" stop-color="#44d400"/></radialGradient><radialGradient id="b9" cx="0.38" cy="0.3" r="0.75"><stop offset="0" stop-color="#fff" stop-opacity="0.85"/><stop offset="0.35" stop-color="#0000d2"/><stop offset="1" stop-color="#0000d2"/></radialGradient></defs><circle cx="420.3" cy="60.7" r="7.7" fill="#d8002c"/><circle cx="420.3" cy="60.7" r="7.7" fill="url(#b7)"/><circle cx="420.3" cy="60.7" r="7.7" fill="none" stroke="#000" stroke-opacity="0.18" stroke-width="0.8"/><circle cx="411.5" cy="77" r="7.7" fill="#44d400"/><circle cx="411.5" cy="77" r="7.7" fill="url(#b8)"/><circle cx="411.5" cy="77" r="7.7" fill="none" stroke="#000" stroke-opacity="0.18" stroke-width="0.8"/><circle cx="428.3" cy="77" r="7.7" fill="#0000d2"/><circle cx="428.3" cy="77" r="7.7" fill="url(#b9)"/><circle cx="428.3" cy="77" r="7.7" fill="none" stroke="#000" stroke-opacity="0.18" stroke-width="0.8"/><defs><radialGradient id="b10" cx="0.38" cy="0.3" r="0.75"><stop offset="0" stop-color="#fff" stop-opacity="0.85"/><stop offset="0.35" stop-color="#d01818"/><stop offset="1" stop-color="#d01818"/></radialGradient><radialGradient id="b11" cx="0.38" cy="0.3" r="0.75"><stop offset="0" stop-color="#fff" stop-opacity="0.85"/><stop offset="0.35" stop-color="#1858d0"/><stop offset="1" stop-color="#1858d0"/></radialGradient><radialGradient id="b12" cx="0.38" cy="0.3" r="0.75"><stop offset="0" stop-color="#fff" stop-opacity="0.85"/><stop offset="0.35" stop-color="#18c030"/><stop offset="1" stop-color="#18c030"/></radialGradient><radialGradient id="b13" cx="0.38" cy="0.3" r="0.75"><stop offset="0" stop-color="#fff" stop-opacity="0.85"/><stop offset="0.35" stop-color="#30d8d8"/><stop offset="1" stop-color="#30d8d8"/></radialGradient><radialGradient id="b14" cx="0.38" cy="0.3" r="0.75"><stop offset="0" stop-color="#fff" stop-opacity="0.85"/><stop offset="0.35" stop-color="#b048e0"/><stop offset="1" stop-color="#b048e0"/></radialGradient><radialGradient id="b15" cx="0.38" cy="0.3" r="0.75"><stop offset="0" stop-color="#fff" stop-opacity="0.85"/><stop offset="0.35" stop-color="#e8d000"/><stop offset="1" stop-color="#e8d000"/></radialGradient></defs><circle cx="449.3" cy="76.7" r="6.5" fill="#d01818"/><circle cx="449.3" cy="76.7" r="6.5" fill="url(#b10)"/><circle cx="449.3" cy="76.7" r="6.5" fill="none" stroke="#000" stroke-opacity="0.18" stroke-width="0.8"/><circle cx="457.3" cy="75.7" r="6.7" fill="#1858d0"/><circle cx="457.3" cy="75.7" r="6.7" fill="url(#b11)"/><circle cx="457.3" cy="75.7" r="6.7" fill="none" stroke="#000" stroke-opacity="0.18" stroke-width="0.8"/><circle cx="464" cy="71.7" r="6" fill="#18c030"/><circle cx="464" cy="71.7" r="6" fill="url(#b12)"/><circle cx="464" cy="71.7" r="6" fill="none" stroke="#000" stroke-opacity="0.18" stroke-width="0.8"/><circle cx="470.3" cy="70.7" r="5" fill="#30d8d8"/><circle cx="470.3" cy="70.7" r="5" fill="url(#b13)"/><circle cx="470.3" cy="70.7" r="5" fill="none" stroke="#000" stroke-opacity="0.18" stroke-width="0.8"/><circle cx="470" cy="62" r="5" fill="#b048e0"/><circle cx="470" cy="62" r="5" fill="url(#b14)"/><circle cx="470" cy="62" r="5" fill="none" stroke="#000" stroke-opacity="0.18" stroke-width="0.8"/><circle cx="464" cy="57.3" r="4.7" fill="#e8d000"/><circle cx="464" cy="57.3" r="4.7" fill="url(#b15)"/><circle cx="464" cy="57.3" r="4.7" fill="none" stroke="#000" stroke-opacity="0.18" stroke-width="0.8"/><defs><radialGradient id="b16" cx="0.38" cy="0.3" r="0.75"><stop offset="0" stop-color="#fff" stop-opacity="0.85"/><stop offset="0.35" stop-color="#e01010"/><stop offset="1" stop-color="#e01010"/></radialGradient><radialGradient id="b17" cx="0.38" cy="0.3" r="0.75"><stop offset="0" stop-color="#fff" stop-opacity="0.85"/><stop offset="0.35" stop-color="#1060d8"/><stop offset="1" stop-color="#1060d8"/></radialGradient><radialGradient id="b18" cx="0.38" cy="0.3" r="0.75"><stop offset="0" stop-color="#fff" stop-opacity="0.85"/><stop offset="0.35" stop-color="#6c6c6c"/><stop offset="1" stop-color="#6c6c6c"/></radialGradient><radialGradient id="b19" cx="0.38" cy="0.3" r="0.75"><stop offset="0" stop-color="#fff" stop-opacity="0.85"/><stop offset="0.35" stop-color="#5c5c5c"/><stop offset="1" stop-color="#5c5c5c"/></radialGradient><radialGradient id="b20" cx="0.38" cy="0.3" r="0.75"><stop offset="0" stop-color="#fff" stop-opacity="0.85"/><stop offset="0.35" stop-color="#c4c4c4"/><stop offset="1" stop-color="#c4c4c4"/></radialGradient><radialGradient id="b21" cx="0.38" cy="0.3" r="0.75"><stop offset="0" stop-color="#fff" stop-opacity="0.85"/><stop offset="0.35" stop-color="#9a9a9a"/><stop offset="1" stop-color="#9a9a9a"/></radialGradient><radialGradient id="b22" cx="0.38" cy="0.3" r="0.75"><stop offset="0" stop-color="#fff" stop-opacity="0.85"/><stop offset="0.35" stop-color="#e8e8e4"/><stop offset="1" stop-color="#e8e8e4"/></radialGradient><radialGradient id="b23" cx="0.38" cy="0.3" r="0.75"><stop offset="0" stop-color="#fff" stop-opacity="0.85"/><stop offset="0.35" stop-color="#e8d000"/><stop offset="1" stop-color="#e8d000"/></radialGradient><radialGradient id="b24" cx="0.38" cy="0.3" r="0.75"><stop offset="0" stop-color="#fff" stop-opacity="0.85"/><stop offset="0.35" stop-color="#c050e8"/><stop offset="1" stop-color="#c050e8"/></radialGradient><radialGradient id="b25" cx="0.38" cy="0.3" r="0.75"><stop offset="0" stop-color="#fff" stop-opacity="0.85"/><stop offset="0.35" stop-color="#38d8d8"/><stop offset="1" stop-color="#38d8d8"/></radialGradient><radialGradient id="b26" cx="0.38" cy="0.3" r="0.75"><stop offset="0" stop-color="#fff" stop-opacity="0.85"/><stop offset="0.35" stop-color="#dcdcdc"/><stop offset="1" stop-color="#dcdcdc"/></radialGradient><radialGradient id="b27" cx="0.38" cy="0.3" r="0.75"><stop offset="0" stop-color="#fff" stop-opacity="0.85"/><stop offset="0.35" stop-color="#18c818"/><stop offset="1" stop-color="#18c818"/></radialGradient></defs><circle cx="487.7" cy="78.7" r="6" fill="#e01010"/><circle cx="487.7" cy="78.7" r="6" fill="url(#b16)"/><circle cx="487.7" cy="78.7" r="6" fill="none" stroke="#000" stroke-opacity="0.18" stroke-width="0.8"/><circle cx="494.7" cy="79" r="5" fill="#1060d8"/><circle cx="494.7" cy="79" r="5" fill="url(#b17)"/><circle cx="494.7" cy="79" r="5" fill="none" stroke="#000" stroke-opacity="0.18" stroke-width="0.8"/><circle cx="501.7" cy="79.3" r="5" fill="#6c6c6c"/><circle cx="501.7" cy="79.3" r="5" fill="url(#b18)"/><circle cx="501.7" cy="79.3" r="5" fill="none" stroke="#000" stroke-opacity="0.18" stroke-width="0.8"/><circle cx="508" cy="78.7" r="6" fill="#5c5c5c"/><circle cx="508" cy="78.7" r="6" fill="url(#b19)"/><circle cx="508" cy="78.7" r="6" fill="none" stroke="#000" stroke-opacity="0.18" stroke-width="0.8"/><circle cx="487" cy="66.7" r="5" fill="#c4c4c4"/><circle cx="487" cy="66.7" r="5" fill="url(#b20)"/><circle cx="487" cy="66.7" r="5" fill="none" stroke="#000" stroke-opacity="0.18" stroke-width="0.8"/><circle cx="487.3" cy="60.7" r="4.3" fill="#9a9a9a"/><circle cx="487.3" cy="60.7" r="4.3" fill="url(#b21)"/><circle cx="487.3" cy="60.7" r="4.3" fill="none" stroke="#000" stroke-opacity="0.18" stroke-width="0.8"/><circle cx="493.7" cy="57" r="4" fill="#e8e8e4"/><circle cx="493.7" cy="57" r="4" fill="url(#b22)"/><circle cx="493.7" cy="57" r="4" fill="none" stroke="#000" stroke-opacity="0.18" stroke-width="0.8"/><circle cx="502.7" cy="57" r="4.3" fill="#e8d000"/><circle cx="502.7" cy="57" r="4.3" fill="url(#b23)"/><circle cx="502.7" cy="57" r="4.3" fill="none" stroke="#000" stroke-opacity="0.18" stroke-width="0.8"/><circle cx="508.7" cy="60.7" r="4.3" fill="#c050e8"/><circle cx="508.7" cy="60.7" r="4.3" fill="url(#b24)"/><circle cx="508.7" cy="60.7" r="4.3" fill="none" stroke="#000" stroke-opacity="0.18" stroke-width="0.8"/><circle cx="509.7" cy="67" r="4.7" fill="#38d8d8"/><circle cx="509.7" cy="67" r="4.7" fill="url(#b25)"/><circle cx="509.7" cy="67" r="4.7" fill="none" stroke="#000" stroke-opacity="0.18" stroke-width="0.8"/><circle cx="492" cy="72.7" r="5" fill="#dcdcdc"/><circle cx="492" cy="72.7" r="5" fill="url(#b26)"/><circle cx="492" cy="72.7" r="5" fill="none" stroke="#000" stroke-opacity="0.18" stroke-width="0.8"/><circle cx="503.7" cy="72.3" r="5.3" fill="#18c818"/><circle cx="503.7" cy="72.3" r="5.3" fill="url(#b27)"/><circle cx="503.7" cy="72.3" r="5.3" fill="none" stroke="#000" stroke-opacity="0.18" stroke-width="0.8"/><path d="M528 59 L544 55 L545.5 53.8 H550.5 L551.5 55 L558.5 56.5 V74.5 L534 83.5 L528 79.5Z" fill="url(#cam)" stroke="#4a4a4a" stroke-width="0.9" stroke-linejoin="round"/><path d="M528 59 L534.5 61 V83.3" fill="none" stroke="#8a8a8a" stroke-width="0.7"/><path d="M534.5 61 L558.5 56.5" stroke="#fafafa" stroke-width="0.8"/><rect x="529.5" y="62" width="3.4" height="16" fill="#e8e8e8" stroke="#a8a8a8" stroke-width="0.5"/><ellipse cx="536.5" cy="58.7" rx="3" ry="1.2" fill="#e8e8e8" stroke="#888" stroke-width="0.5"/><circle cx="548.7" cy="69.3" r="5.8" fill="#b4b4b4" stroke="#555" stroke-width="0.8"/><circle cx="548.7" cy="69.3" r="4" fill="#444" stroke="#222" stroke-width="0.6"/><circle cx="548.7" cy="69.3" r="1.8" fill="#1a6ae0"/><path d="M534.5 83.3 L558.5 74.5" stroke="#2a2a2a" stroke-width="1.2"/><path d="M571.8 56 V80 Q571.8 81 572.8 80.5 L594.5 68 Q595.4 67.3 594.5 66.6 L572.8 55.4 Q571.8 55 571.8 56Z" fill="url(#play)" stroke="#30c050" stroke-width="0.8"/><path d="M572.5 76 L592.5 66.5" stroke="#b0f0bc" stroke-width="0.8" opacity="0.8"/><rect x="618.5" y="50.5" width="38" height="38" fill="#fdeec9" stroke="#000080" stroke-width="1"/><rect x="663.5" y="50.5" width="38" height="38" fill="#fdeec9" stroke="#000080" stroke-width="1"/><rect x="702.5" y="50.5" width="38" height="38" fill="#fdeec9" stroke="#000080" stroke-width="1"/><rect x="741.5" y="50.5" width="38" height="38" fill="#fdeec9" stroke="#000080" stroke-width="1"/><g transform="translate(618,50)"><path d="M31.5 3.2 L34.6 4.3 Q35.3 4.6 35.3 5.5 V29.3 L32 31.3 Z" fill="url(#mside)"/><path d="M6 10 L31.5 3.6 V26.5 H4.6 L5.4 12 Z" fill="#fff" stroke="#4e5d6c" stroke-width="1.1" stroke-linejoin="round"/><path d="M4.2 26.3 H31.8 V31.3 H7.2 L4.2 29.4 Z" fill="url(#mbez)" stroke="#56677a" stroke-width="0.7"/><rect x="6" y="28" width="3.4" height="1.4" fill="#5a6878"/><rect x="26" y="28" width="4" height="1.4" fill="#5a6878"/><rect x="17.5" y="28.2" width="1.3" height="1.2" fill="#8a9cb0"/><path d="M15.5 31.5 H25 L24 33.6 H16.5 Z" fill="#3e4650"/><path d="M11.5 33.4 H25.2 L27.8 35.3 H8.4 Z" fill="#333a44"/><rect x="9.0" y="13.0" width="4.4" height="1.6" fill="#fbdba0"/><rect x="14.6" y="11.9" width="4.4" height="1.6" fill="#fbdba0"/><rect x="20.2" y="10.8" width="4.4" height="1.6" fill="#fbdba0"/><rect x="25.799999999999997" y="9.7" width="4.4" height="1.6" fill="#fbdba0"/><rect x="9.0" y="15.7" width="4.4" height="1.6" fill="#fbdba0"/><rect x="14.6" y="14.6" width="4.4" height="1.6" fill="#fbdba0"/><rect x="20.2" y="13.5" width="4.4" height="1.6" fill="#fbdba0"/><rect x="25.799999999999997" y="12.399999999999999" width="4.4" height="1.6" fill="#fbdba0"/><rect x="9.0" y="18.4" width="4.4" height="1.6" fill="#fbdba0"/><rect x="14.6" y="17.299999999999997" width="4.4" height="1.6" fill="#fbdba0"/><rect x="20.2" y="16.2" width="4.4" height="1.6" fill="#fbdba0"/><rect x="25.799999999999997" y="15.099999999999998" width="4.4" height="1.6" fill="#fbdba0"/><rect x="9.0" y="21.1" width="4.4" height="1.6" fill="#fbdba0"/><rect x="14.6" y="20.0" width="4.4" height="1.6" fill="#fbdba0"/><rect x="20.2" y="18.900000000000002" width="4.4" height="1.6" fill="#fbdba0"/><rect x="25.799999999999997" y="17.8" width="4.4" height="1.6" fill="#fbdba0"/><rect x="9.0" y="23.8" width="4.4" height="1.6" fill="#fbdba0"/><rect x="14.6" y="22.7" width="4.4" height="1.6" fill="#fbdba0"/><rect x="20.2" y="21.6" width="4.4" height="1.6" fill="#fbdba0"/><rect x="25.799999999999997" y="20.5" width="4.4" height="1.6" fill="#fbdba0"/></g><g transform="translate(663,50)"><path d="M31.5 3.2 L34.6 4.3 Q35.3 4.6 35.3 5.5 V29.3 L32 31.3 Z" fill="url(#mside)"/><path d="M6 10 L31.5 3.6 V26.5 H4.6 L5.4 12 Z" fill="#fff" stroke="#4e5d6c" stroke-width="1.1" stroke-linejoin="round"/><path d="M4.2 26.3 H31.8 V31.3 H7.2 L4.2 29.4 Z" fill="url(#mbez)" stroke="#56677a" stroke-width="0.7"/><rect x="6" y="28" width="3.4" height="1.4" fill="#5a6878"/><rect x="26" y="28" width="4" height="1.4" fill="#5a6878"/><rect x="17.5" y="28.2" width="1.3" height="1.2" fill="#8a9cb0"/><path d="M15.5 31.5 H25 L24 33.6 H16.5 Z" fill="#3e4650"/><path d="M11.5 33.4 H25.2 L27.8 35.3 H8.4 Z" fill="#333a44"/><path d="M10 24.5 Q14 24.8 17 22.5 Q22 20.5 26 16 Q29 12.5 30 8.5" fill="none" stroke="#d2d200" stroke-width="1.3"/></g><g transform="translate(702,50)"><path d="M31.5 3.2 L34.6 4.3 Q35.3 4.6 35.3 5.5 V29.3 L32 31.3 Z" fill="url(#mside)"/><path d="M6 10 L31.5 3.6 V26.5 H4.6 L5.4 12 Z" fill="#fff" stroke="#4e5d6c" stroke-width="1.1" stroke-linejoin="round"/><path d="M4.2 26.3 H31.8 V31.3 H7.2 L4.2 29.4 Z" fill="url(#mbez)" stroke="#56677a" stroke-width="0.7"/><rect x="6" y="28" width="3.4" height="1.4" fill="#5a6878"/><rect x="26" y="28" width="4" height="1.4" fill="#5a6878"/><rect x="17.5" y="28.2" width="1.3" height="1.2" fill="#8a9cb0"/><path d="M15.5 31.5 H25 L24 33.6 H16.5 Z" fill="#3e4650"/><path d="M11.5 33.4 H25.2 L27.8 35.3 H8.4 Z" fill="#333a44"/><path d="M10.5 18.5 L13.5 16.5 L15.5 16.5 L17.5 18.5 L20 19.3 L22.5 18.5 L24.5 16.8 L26.5 16.5" fill="none" stroke="#d2d200" stroke-width="1.3"/></g><g transform="translate(741,50)"><path d="M31.5 3.2 L34.6 4.3 Q35.3 4.6 35.3 5.5 V29.3 L32 31.3 Z" fill="url(#mside)"/><path d="M6 10 L31.5 3.6 V26.5 H4.6 L5.4 12 Z" fill="#fff" stroke="#4e5d6c" stroke-width="1.1" stroke-linejoin="round"/><path d="M4.2 26.3 H31.8 V31.3 H7.2 L4.2 29.4 Z" fill="url(#mbez)" stroke="#56677a" stroke-width="0.7"/><rect x="6" y="28" width="3.4" height="1.4" fill="#5a6878"/><rect x="26" y="28" width="4" height="1.4" fill="#5a6878"/><rect x="17.5" y="28.2" width="1.3" height="1.2" fill="#8a9cb0"/><path d="M15.5 31.5 H25 L24 33.6 H16.5 Z" fill="#3e4650"/><path d="M11.5 33.4 H25.2 L27.8 35.3 H8.4 Z" fill="#333a44"/><path d="M7 23 V21 L10.5 17 L14 17.5 L17.5 15.5 L21 18.5 L24 17 H29" fill="none" stroke="#10a010" stroke-width="1.5"/><path d="M8 15.5 L12 17 L16.5 20.5 L20 18 L26 23.5" fill="none" stroke="#1038b0" stroke-width="1.5"/><path d="M10.5 16 L12 12.5 L14 12.5 L16.5 17.5 L19.5 11 L23 15.5 L26 15.5 L29 13.5" fill="none" stroke="#e85020" stroke-width="1.5"/></g><g transform="translate(780,50)"><path d="M31.5 3.2 L34.6 4.3 Q35.3 4.6 35.3 5.5 V29.3 L32 31.3 Z" fill="url(#mside)"/><path d="M6 10 L31.5 3.6 V26.5 H4.6 L5.4 12 Z" fill="#fff" stroke="#4e5d6c" stroke-width="1.1" stroke-linejoin="round"/><path d="M4.2 26.3 H31.8 V31.3 H7.2 L4.2 29.4 Z" fill="url(#mbez)" stroke="#56677a" stroke-width="0.7"/><rect x="6" y="28" width="3.4" height="1.4" fill="#5a6878"/><rect x="26" y="28" width="4" height="1.4" fill="#5a6878"/><rect x="17.5" y="28.2" width="1.3" height="1.2" fill="#8a9cb0"/><path d="M15.5 31.5 H25 L24 33.6 H16.5 Z" fill="#3e4650"/><path d="M11.5 33.4 H25.2 L27.8 35.3 H8.4 Z" fill="#333a44"/><path d="M8 13 L11.5 17 L15 19.5 L21 14.5 L27 13.8" fill="none" stroke="#8878e0" stroke-width="1"/><path d="M7.5 12V23.5H28" fill="none" stroke="#d8d8d8" stroke-width="0.6"/><path d="M28 9V23" stroke="#b0e0a0" stroke-width="0.6" stroke-dasharray="1 1.5"/></g><g transform="translate(825,50)"><path d="M31.5 3.2 L34.6 4.3 Q35.3 4.6 35.3 5.5 V29.3 L32 31.3 Z" fill="url(#mside)"/><path d="M6 10 L31.5 3.6 V26.5 H4.6 L5.4 12 Z" fill="#fff" stroke="#4e5d6c" stroke-width="1.1" stroke-linejoin="round"/><path d="M4.2 26.3 H31.8 V31.3 H7.2 L4.2 29.4 Z" fill="url(#mbez)" stroke="#56677a" stroke-width="0.7"/><rect x="6" y="28" width="3.4" height="1.4" fill="#5a6878"/><rect x="26" y="28" width="4" height="1.4" fill="#5a6878"/><rect x="17.5" y="28.2" width="1.3" height="1.2" fill="#8a9cb0"/><path d="M15.5 31.5 H25 L24 33.6 H16.5 Z" fill="#3e4650"/><path d="M11.5 33.4 H25.2 L27.8 35.3 H8.4 Z" fill="#333a44"/><defs><linearGradient id="cie1" x1="0" x2="0.25" y1="0" y2="1"><stop offset="0" stop-color="#10e010"/><stop offset="0.35" stop-color="#20e860"/><stop offset="0.65" stop-color="#20c8e8"/><stop offset="1" stop-color="#1010ff"/></linearGradient><linearGradient id="cie2" x1="0" x2="1" y1="0" y2="0"><stop offset="0.25" stop-color="#ff0000" stop-opacity="0"/><stop offset="0.7" stop-color="#ff2020" stop-opacity="0.75"/><stop offset="1" stop-color="#ff0000"/></linearGradient><radialGradient id="cie3" cx="0.5" cy="0.62" r="0.28"><stop offset="0" stop-color="#fff" stop-opacity="0.95"/><stop offset="1" stop-color="#fff" stop-opacity="0"/></radialGradient></defs><path d="M12.7 9.3 Q13.6 8.8 14.8 10.2 L26.5 20.3 L15.6 25.6 Q14.4 26 14 24.6 L12.4 11.5Z" fill="url(#cie1)"/><path d="M12.7 9.3 Q13.6 8.8 14.8 10.2 L26.5 20.3 L15.6 25.6 Q14.4 26 14 24.6 L12.4 11.5Z" fill="url(#cie2)"/><path d="M12.7 9.3 Q13.6 8.8 14.8 10.2 L26.5 20.3 L15.6 25.6 Q14.4 26 14 24.6 L12.4 11.5Z" fill="url(#cie3)"/></g><g transform="translate(870,50)"><path d="M31.5 3.2 L34.6 4.3 Q35.3 4.6 35.3 5.5 V29.3 L32 31.3 Z" fill="url(#mside)"/><path d="M6 10 L31.5 3.6 V26.5 H4.6 L5.4 12 Z" fill="#fff" stroke="#4e5d6c" stroke-width="1.1" stroke-linejoin="round"/><path d="M4.2 26.3 H31.8 V31.3 H7.2 L4.2 29.4 Z" fill="url(#mbez)" stroke="#56677a" stroke-width="0.7"/><rect x="6" y="28" width="3.4" height="1.4" fill="#5a6878"/><rect x="26" y="28" width="4" height="1.4" fill="#5a6878"/><rect x="17.5" y="28.2" width="1.3" height="1.2" fill="#8a9cb0"/><path d="M15.5 31.5 H25 L24 33.6 H16.5 Z" fill="#3e4650"/><path d="M11.5 33.4 H25.2 L27.8 35.3 H8.4 Z" fill="#333a44"/><path d="M9.5 24.5 H14 L15 23.5 H17.5 L18.5 22.5 H21 L22 21.5 H24.5 L25.5 20.5 H27.5 L28.5 19.5" fill="none" stroke="#d2d200" stroke-width="1.2"/></g><g transform="translate(909,50)"><path d="M31.5 3.2 L34.6 4.3 Q35.3 4.6 35.3 5.5 V29.3 L32 31.3 Z" fill="url(#mside)"/><path d="M6 10 L31.5 3.6 V26.5 H4.6 L5.4 12 Z" fill="#fff" stroke="#4e5d6c" stroke-width="1.1" stroke-linejoin="round"/><path d="M4.2 26.3 H31.8 V31.3 H7.2 L4.2 29.4 Z" fill="url(#mbez)" stroke="#56677a" stroke-width="0.7"/><rect x="6" y="28" width="3.4" height="1.4" fill="#5a6878"/><rect x="26" y="28" width="4" height="1.4" fill="#5a6878"/><rect x="17.5" y="28.2" width="1.3" height="1.2" fill="#8a9cb0"/><path d="M15.5 31.5 H25 L24 33.6 H16.5 Z" fill="#3e4650"/><path d="M11.5 33.4 H25.2 L27.8 35.3 H8.4 Z" fill="#333a44"/><path d="M10.5 16.5 H12.5 L13.5 15.5 H15.5 L16.5 14.5 H18.5 L19.5 13.5 H21.5 L22.5 12.5 H24.5 L25.5 11.5 H27.5 L28.5 10.5 L30.5 9" fill="none" stroke="#d2d200" stroke-width="1.2"/></g><g transform="translate(954,50)"><path d="M31.5 3.2 L34.6 4.3 Q35.3 4.6 35.3 5.5 V29.3 L32 31.3 Z" fill="url(#mside)"/><path d="M6 10 L31.5 3.6 V26.5 H4.6 L5.4 12 Z" fill="#fff" stroke="#4e5d6c" stroke-width="1.1" stroke-linejoin="round"/><path d="M4.2 26.3 H31.8 V31.3 H7.2 L4.2 29.4 Z" fill="url(#mbez)" stroke="#56677a" stroke-width="0.7"/><rect x="6" y="28" width="3.4" height="1.4" fill="#5a6878"/><rect x="26" y="28" width="4" height="1.4" fill="#5a6878"/><rect x="17.5" y="28.2" width="1.3" height="1.2" fill="#8a9cb0"/><path d="M15.5 31.5 H25 L24 33.6 H16.5 Z" fill="#3e4650"/><path d="M11.5 33.4 H25.2 L27.8 35.3 H8.4 Z" fill="#333a44"/><path d="M7.5 12.5 H12 L13 11.5 H17 L18 10.5 H22 L23 9.5 H27 L28 8.5 H30.5" fill="none" stroke="#d8d000" stroke-width="1.1"/><path d="M7.5 14.5 H12 L13 13.5 H17 L18 12.5 H22 L23 11.5 H27 L28 10.5 H30.5" fill="none" stroke="#00f0f0" stroke-width="1.1"/><path d="M7.5 16.5 H12 L13 15.5 H17 L18 14.5 H22 L23 13.5 H27 L28 12.5 H30.5" fill="none" stroke="#00f000" stroke-width="1.1"/><path d="M7.5 20.5 H12 L13 19.5 H17 L18 18.5 H22 L23 17.5 H27 L28 16.5 H30.5" fill="none" stroke="#ff00ff" stroke-width="1.1"/><path d="M7.5 22.5 H12 L13 21.5 H17 L18 20.5 H22 L23 19.5 H27 L28 18.5 H30.5" fill="none" stroke="#ff0000" stroke-width="1.1"/><path d="M7.5 24.5 H12 L13 23.5 H17 L18 22.5 H22 L23 21.5 H27 L28 20.5 H30.5" fill="none" stroke="#0000ff" stroke-width="1.1"/></g><g transform="translate(993,50)"><path d="M31.5 3.2 L34.6 4.3 Q35.3 4.6 35.3 5.5 V29.3 L32 31.3 Z" fill="url(#mside)"/><path d="M6 10 L31.5 3.6 V26.5 H4.6 L5.4 12 Z" fill="#fff" stroke="#4e5d6c" stroke-width="1.1" stroke-linejoin="round"/><path d="M4.2 26.3 H31.8 V31.3 H7.2 L4.2 29.4 Z" fill="url(#mbez)" stroke="#56677a" stroke-width="0.7"/><rect x="6" y="28" width="3.4" height="1.4" fill="#5a6878"/><rect x="26" y="28" width="4" height="1.4" fill="#5a6878"/><rect x="17.5" y="28.2" width="1.3" height="1.2" fill="#8a9cb0"/><path d="M15.5 31.5 H25 L24 33.6 H16.5 Z" fill="#3e4650"/><path d="M11.5 33.4 H25.2 L27.8 35.3 H8.4 Z" fill="#333a44"/><path d="M6.5 16.5 L8 15 H12 L13 14 H17 L18.5 13 L21 12 H24 L26 12.5 H30" fill="none" stroke="#0000ff" stroke-width="1.3"/><path d="M7.5 16 L9 14.5 H13 L15 14 L17 12.5 H19 L21 13.5 L24 13 L27 13.5" fill="none" stroke="#00d000" stroke-width="1.3"/><path d="M6.5 16.5 L8.5 14 H13 L15 14.5 H19.5 L21.5 13 L23 12.5 L25 13.5 H29" fill="none" stroke="#ff0000" stroke-width="1.3"/><path d="M6.5 24.5 L8.5 23 L11 24 L13.5 21 L15 20.5 L18.5 23.5 H21 L23.5 21.5 H26 L29.5 24" fill="none" stroke="#ff00ff" stroke-width="1.3"/></g><g transform="translate(1038,50)"><path d="M31.5 3.2 L34.6 4.3 Q35.3 4.6 35.3 5.5 V29.3 L32 31.3 Z" fill="url(#mside)"/><path d="M6 10 L31.5 3.6 V26.5 H4.6 L5.4 12 Z" fill="#2a2a2a" stroke="#4e5d6c" stroke-width="1.1" stroke-linejoin="round"/><path d="M4.2 26.3 H31.8 V31.3 H7.2 L4.2 29.4 Z" fill="url(#mbez)" stroke="#56677a" stroke-width="0.7"/><rect x="6" y="28" width="3.4" height="1.4" fill="#5a6878"/><rect x="26" y="28" width="4" height="1.4" fill="#5a6878"/><rect x="17.5" y="28.2" width="1.3" height="1.2" fill="#8a9cb0"/><path d="M15.5 31.5 H25 L24 33.6 H16.5 Z" fill="#3e4650"/><path d="M11.5 33.4 H25.2 L27.8 35.3 H8.4 Z" fill="#333a44"/><path d="M7 12.5 H10.5 L11.5 11.5 H15 L16 10.5 H19.5 L20.5 9.5 H24 L25 8.5 H28 L30.5 7.5" fill="none" stroke="#e0d800" stroke-width="1.2"/><path d="M6.5 17.5 L9 16 L11.5 17 L14.5 14.5 L17.5 17 L20 15 L23 16.5 L26 14.5 L30.5 14.5" fill="none" stroke="#00a000" stroke-width="1.2"/><path d="M6.5 19 L9 17 L12 15.5 L15 16.5 L18 15 L21 17 L24.5 15.5 L27.5 16 L30.5 13.5" fill="none" stroke="#f06020" stroke-width="1.2" stroke-dasharray="2 1.2"/><path d="M6.5 16 L10 17.5 L13 15 L20 17.5 L22 16 L25.5 15 L30.5 15.5" fill="none" stroke="#0030c0" stroke-width="1" stroke-dasharray="1.5 2"/><path d="M6.5 21.8 H12 L13 21 H20 L21 20 H30.5" fill="none" stroke="#ff00ff" stroke-width="1.2"/><path d="M7.5 24 H18 L19 23 H30.5" fill="none" stroke="#8868e8" stroke-width="1"/></g></svg>
<svg class="a" style="left:2px;top:3px" width="16" height="16" viewBox="0 0 16 16" shape-rendering="crispEdges"><defs><linearGradient id="ai2" x1="0" x2="0" y1="0" y2="1"><stop offset="0" stop-color="#000"/><stop offset="0.5" stop-color="#444"/><stop offset="1" stop-color="#fff"/></linearGradient></defs><rect width="16" height="16" fill="url(#ai2)"/><rect x="2" y="6" width="3" height="10" fill="#c00000"/><rect x="5" y="6" width="1" height="10" fill="#600000"/><rect x="7" y="3" width="3" height="13" fill="#00b000"/><rect x="10" y="3" width="1" height="13" fill="#005800"/><rect x="12" y="6" width="3" height="10" fill="#0000d0"/></svg>
<svg class="a" style="left:12px;top:27px" width="16" height="16" viewBox="0 0 16 16" shape-rendering="crispEdges"><defs><linearGradient id="ai12" x1="0" x2="0" y1="0" y2="1"><stop offset="0" stop-color="#000"/><stop offset="0.5" stop-color="#444"/><stop offset="1" stop-color="#fff"/></linearGradient></defs><rect width="16" height="16" fill="url(#ai12)"/><rect x="2" y="6" width="3" height="10" fill="#c00000"/><rect x="5" y="6" width="1" height="10" fill="#600000"/><rect x="7" y="3" width="3" height="13" fill="#00b000"/><rect x="10" y="3" width="1" height="13" fill="#005800"/><rect x="12" y="6" width="3" height="10" fill="#0000d0"/></svg>
<div class="a" style="left:5px;top:29px;width:2px;height:2px;background:#7a9cc4;"></div>
<div class="a" style="left:5px;top:33px;width:2px;height:2px;background:#7a9cc4;"></div>
<div class="a" style="left:5px;top:37px;width:2px;height:2px;background:#7a9cc4;"></div>
<div class="a" style="left:5px;top:41px;width:2px;height:2px;background:#7a9cc4;"></div>
<svg class="a" style="left:1588px;top:132px" width="18" height="18" viewBox="0 0 18 18"><defs><linearGradient id="cf1588" x1="0" x2="1" y1="0" y2="1"><stop offset="0" stop-color="#5a98e8"/><stop offset="1" stop-color="#1c50b8"/></linearGradient></defs><path d="M1.2 2.6 Q1.2 1.4 2.4 1.2 L9 0.4 Q10.4 0.3 10.5 1.6 L11.6 14 Q11.7 15.3 10.4 15.6 L3.6 16.8 Q2.2 17 2 15.6Z" fill="url(#cf1588)" stroke="#1a3f90" stroke-width="0.6"/><path d="M2.9 3.6 L9 2.8 L9.9 13 L3.7 14Z" fill="#f4f8ff"/><path d="M4.2 8.2 L6.3 11.6 L8.8 5.6" fill="none" stroke="#d8b040" stroke-width="1.5"/><path d="M8.8 11 L14.6 7.8" stroke="#4a88e0" stroke-width="1.6"/><circle cx="15.6" cy="7.2" r="1.3" fill="#d85040"/></svg>
<svg class="a" style="left:1718px;top:134px" width="18" height="18" viewBox="0 0 18 18"><defs><linearGradient id="cf1718" x1="0" x2="1" y1="0" y2="1"><stop offset="0" stop-color="#5a98e8"/><stop offset="1" stop-color="#1c50b8"/></linearGradient></defs><path d="M1.2 2.6 Q1.2 1.4 2.4 1.2 L9 0.4 Q10.4 0.3 10.5 1.6 L11.6 14 Q11.7 15.3 10.4 15.6 L3.6 16.8 Q2.2 17 2 15.6Z" fill="url(#cf1718)" stroke="#1a3f90" stroke-width="0.6"/><path d="M2.9 3.6 L9 2.8 L9.9 13 L3.7 14Z" fill="#f4f8ff"/><path d="M4.2 8.2 L6.3 11.6 L8.8 5.6" fill="none" stroke="#d8b040" stroke-width="1.5"/><path d="M8.8 11 L14.6 7.8" stroke="#4a88e0" stroke-width="1.6"/><circle cx="15.6" cy="7.2" r="1.3" fill="#d85040"/></svg>
<svg class="a" style="left:1818px;top:266px" width="33" height="28" viewBox="0 0 33 28"><defs><linearGradient id="gof" x1="0" x2="1" y1="0" y2="1"><stop offset="0" stop-color="#10d048"/><stop offset="0.5" stop-color="#28f068"/><stop offset="1" stop-color="#08b840"/></linearGradient></defs><path d="M1.5 1 H7 L10.5 10 L12 18 L13.5 26.8 L11 26 L1.5 22Z" fill="#b4b4b4"/><path d="M20.5 1 L31 6 V26.8 H25 L30 21.5 L25 19 L22.5 15 L21 8Z" fill="#b4b4b4"/><path d="M3 4.5H7V7.5H9V11.5H6V14.5H3ZM3 16H6.5V18.5H9V22.5L6 21 3 20Z" fill="#dadada" stroke="#4a4a4a" stroke-width="0.7"/><path d="M29.5 8H25.5V11H23.5V14.5H26.5V17.5H29.5Z" fill="#dadada" stroke="#4a4a4a" stroke-width="0.7"/><path d="M1 1V22.5" stroke="#000" stroke-width="1.2"/><path d="M0 2.5H2M0 5.5H2M0 8.5H2M0 11.5H2M0 14.5H2M0 17.5H2M0 20.5H2" stroke="#000" stroke-width="0.9"/><path d="M31 5.5V27" stroke="#000" stroke-width="1.2"/><path d="M30 7.5H32.5M30 10.5H32.5M30 13.5H32.5M30 16.5H32.5M30 19.5H32.5M30 22.5H32.5M30 25.5H32.5" stroke="#000" stroke-width="0.9"/><path d="M6 1 H20.7 L21 8 L22.5 15 L25 19 L30 21.5 L25 26.8 H13 L11.5 20 L10.5 12 L8.5 5Z" fill="#0b6a5c" stroke="#101818" stroke-width="0.8"/><path d="M10.8 1.5 H18 L18.6 5.6 L12.6 8Z M13.2 10 L19.6 7.2 L21.2 15.4 L14.8 18.8Z M15.3 21 L21.6 17.6 L27 22 L23.2 26.3 H16.6Z" fill="url(#gof)"/><path d="M9 3.5L11.5 13L12.8 21L14 26M20.3 3L20.8 9L22.4 16" stroke="#18d060" stroke-width="0.9" stroke-dasharray="0.9 1.6" fill="none"/></svg>
<svg class="a" style="left:1818px;top:295px" width="30" height="28" viewBox="0 0 30 28"><defs><linearGradient id="bin" x1="0" x2="1" y1="0" y2="1"><stop offset="0" stop-color="#a8d4f8"/><stop offset="0.4" stop-color="#e4f4ff"/><stop offset="1" stop-color="#8cc0ec"/></linearGradient></defs><path d="M1.5 5.5 Q14 -0.5 28.5 2.5 L27 22 Q20 27.5 7 26.5Z" fill="url(#bin)" stroke="#9cc4e4" stroke-width="0.6"/><path d="M1.5 5.5 Q14 -0.5 28.5 2.5 Q20 6 14 5.5 Q7 5 1.5 5.5Z" fill="#7cb4ec" opacity="0.85"/><ellipse cx="15" cy="23" rx="9" ry="3" fill="#c4e0f8" opacity="0.8"/><g fill="none" stroke="#1c9c1c" stroke-width="2.6"><path d="M14.2 15.5 A4.6 4.6 0 0 1 21.5 11.6"/><path d="M23 16.6 A4.6 4.6 0 0 1 15.7 20.5"/></g><path d="M19.8 8.6 L24.6 10.6 L21.6 14.8Z" fill="#1c9c1c"/><path d="M17.4 23.5 L12.6 21.5 L15.6 17.3Z" fill="#1c9c1c"/><path d="M27.6 3 L26.6 22" stroke="#5a7890" stroke-width="0.8"/></svg>
<svg class="a" style="left:1818px;top:328px" width="33" height="24" viewBox="0 0 33 24" shape-rendering="crispEdges"><rect x="0" y="11" width="2" height="12" fill="#000090"/><rect x="0" y="10" width="2" height="1.5" fill="#ffff00"/><rect x="2" y="9" width="2" height="14" fill="#ff00ff"/><rect x="2" y="8" width="2" height="1.5" fill="#ffff00"/><rect x="4" y="5" width="1" height="18" fill="#0000ff"/><rect x="4" y="4" width="1" height="1.5" fill="#ffff00"/><rect x="5" y="3" width="3" height="20" fill="#0000ff"/><rect x="5" y="2" width="3" height="1.5" fill="#ffff00"/><rect x="8" y="6" width="3" height="17" fill="#00ffff"/><rect x="8" y="5" width="3" height="1.5" fill="#ffff00"/><rect x="11" y="9" width="2" height="14" fill="#00ff00"/><rect x="11" y="8" width="2" height="1.5" fill="#ffff00"/><rect x="13" y="8" width="2" height="15" fill="#00ff00"/><rect x="13" y="7" width="2" height="1.5" fill="#ffff00"/><rect x="15" y="4" width="2" height="19" fill="#ffff00"/><rect x="15" y="3" width="2" height="1.5" fill="#ffff00"/><rect x="17" y="1" width="4" height="22" fill="#ffff00"/><rect x="17" y="0" width="4" height="1.5" fill="#ffff00"/><rect x="21" y="3" width="1" height="20" fill="#ffff00"/><rect x="21" y="2" width="1" height="1.5" fill="#ffff00"/><rect x="22" y="4" width="2" height="19" fill="#900000"/><rect x="22" y="3" width="2" height="1.5" fill="#ffff00"/><rect x="24" y="8" width="2" height="15" fill="#900000"/><rect x="24" y="7" width="2" height="1.5" fill="#ffff00"/><rect x="26" y="10" width="2" height="13" fill="#ff0000"/><rect x="26" y="9" width="2" height="1.5" fill="#ffff00"/><rect x="28" y="8" width="2" height="15" fill="#ff0000"/><rect x="28" y="7" width="2" height="1.5" fill="#ffff00"/><rect x="30" y="10" width="2" height="13" fill="#ff0000"/><rect x="30" y="9" width="2" height="1.5" fill="#ffff00"/></svg>
<svg class="a" style="left:1790px;top:0" width="120" height="46" viewBox="1790 0 120 46" shape-rendering="crispEdges" fill="none" stroke="#000" stroke-width="1"><path d="M1799 10.5H1809"/><rect x="1844.5" y="7.5" width="7" height="7" fill="#fff"/><path d="M1846.5 7.5V5.5H1853.5V12.5H1851.5"/><g shape-rendering="auto" stroke-width="1.1"><path d="M1890 5L1900 15M1900 5L1890 15"/></g><rect x="1852" y="37" width="7" height="2" fill="#000" stroke="none"/><path d="M1872.5 33V31H1878.5V36.5H1877" stroke-width="1"/><rect x="1872" y="30" width="7" height="2" fill="#000" stroke="none"/><rect x="1870.5" y="34.5" width="6" height="4" /><rect x="1870" y="33" width="7" height="2" fill="#000" stroke="none"/><g shape-rendering="auto" stroke-width="2.2"><path d="M1890.5 30.5L1897.5 37.5M1897.5 30.5L1890.5 37.5"/></g></svg>
<svg class="a" style="left:0;top:1041px" width="340" height="21" viewBox="0 1041 340 21"><rect x="0" y="1041" width="340" height="2" fill="#f0f0f0"/><rect x="0" y="1042" width="340" height="1" fill="#000"/><path d="M118.6 1042.5 L126.6 1060.5 H187.5 L195.5 1042.5" fill="#f0f0f0" stroke="#000" stroke-width="1"/><path d="M186.5 1042.5 L194.5 1060.5 H239 L247 1042.5" fill="#f0f0f0" stroke="#000" stroke-width="1"/><path d="M238.5 1042.5 L246.5 1060.5 H313.5 L321.5 1042.5" fill="#f0f0f0" stroke="#000" stroke-width="1"/><path d="M55 1041 L55 1042.5 L63 1060.5 H119.5 L127.5 1042.5 V1041Z" fill="#fff" stroke="none"/><path d="M55 1042.5 L63 1060.5 H119.5 L127.5 1042.5" fill="none" stroke="#000" stroke-width="1"/><rect x="0" y="1042" width="55" height="19" fill="#000"/><rect x="1" y="1044" width="17" height="16" fill="#f0f0f0"/><rect x="1" y="1044" width="17" height="1" fill="#fff"/><rect x="1" y="1044" width="1" height="16" fill="#fff"/><rect x="19" y="1044" width="16" height="16" fill="#f0f0f0"/><rect x="19" y="1044" width="16" height="1" fill="#fff"/><rect x="19" y="1044" width="1" height="16" fill="#fff"/><rect x="36" y="1044" width="17" height="16" fill="#f0f0f0"/><rect x="36" y="1044" width="17" height="1" fill="#fff"/><rect x="36" y="1044" width="1" height="16" fill="#fff"/><path d="M5 1047.5L14 1056.5M14 1047.5L5 1056.5" stroke="#000" stroke-width="1.3" fill="none"/><path d="M29 1047.5V1056.5L24.5 1052Z" fill="#000"/><path d="M42 1047.5V1056.5L46.5 1052Z" fill="#000"/></svg>
<div class="t seg" style="left:65.74px;letter-spacing:0.022px;top:1046.00px;font-size:11px;font-weight:bold;">Measures</div>
<div class="t seg" style="left:133.34px;letter-spacing:-0.939px;top:1046.00px;font-size:11px;">Luminance</div>
<div class="t seg" style="left:199.34px;letter-spacing:-1.326px;top:1046.00px;font-size:11px;">Gamma</div>
<div class="t seg" style="left:254.34px;letter-spacing:-0.820px;top:1046.00px;font-size:11px;">RGB Levels</div>
<svg class="a" style="left:1751px;top:1044px" width="15" height="14" viewBox="0 0 15 14"><path d="M0.5 0.5H14.5V9L13 13.5H9L8 10.5H6.5L5.5 13.5H2L0.5 9Z" fill="#808000" stroke="#000" stroke-width="1"/><rect x="2" y="2" width="8" height="6" fill="#e00000"/><path d="M3 5H8M6 3L8.5 5L6 7" stroke="#fff" stroke-width="1.2" fill="none"/><rect x="9" y="9" width="4.5" height="4" fill="#ffff00"/></svg>
<div class="a" style="left:1846px;top:1044px;width:13px;height:13px;background:#fff;border:1px solid;border-color:#808080 #fff #fff #808080;box-shadow:inset 1px 1px 0 #404040,inset -1px -1px 0 #d4d4d4"></div>
<div class="t seg" style="left:1863.74px;letter-spacing:0.057px;top:1046.00px;font-size:11px;">Reference</div>
<div class="a" style="left:1742px;top:1062px;width:75px;height:17px;border:1px solid #a9bcd8;border-bottom:none;background:#edf2fa"></div>
<div class="a" style="left:1820px;top:1062px;width:28px;height:17px;border:1px solid #a9bcd8;border-bottom:none;background:#edf2fa"></div>
<div class="a" style="left:1851px;top:1062px;width:33px;height:17px;border:1px solid #a9bcd8;border-bottom:none;background:#edf2fa"></div>
<div class="a" style="left:1887px;top:1062px;width:32px;height:17px;border:1px solid #a9bcd8;border-bottom:none;background:#edf2fa"></div>
<div class="t seg" style="left:1853.28px;letter-spacing:0.056px;top:1066.00px;font-size:12px;">NUM</div>
<div class="a" style="left:0px;top:1078px;width:1920px;height:2px;background:#3c3c3c;"></div>
</body></html>
